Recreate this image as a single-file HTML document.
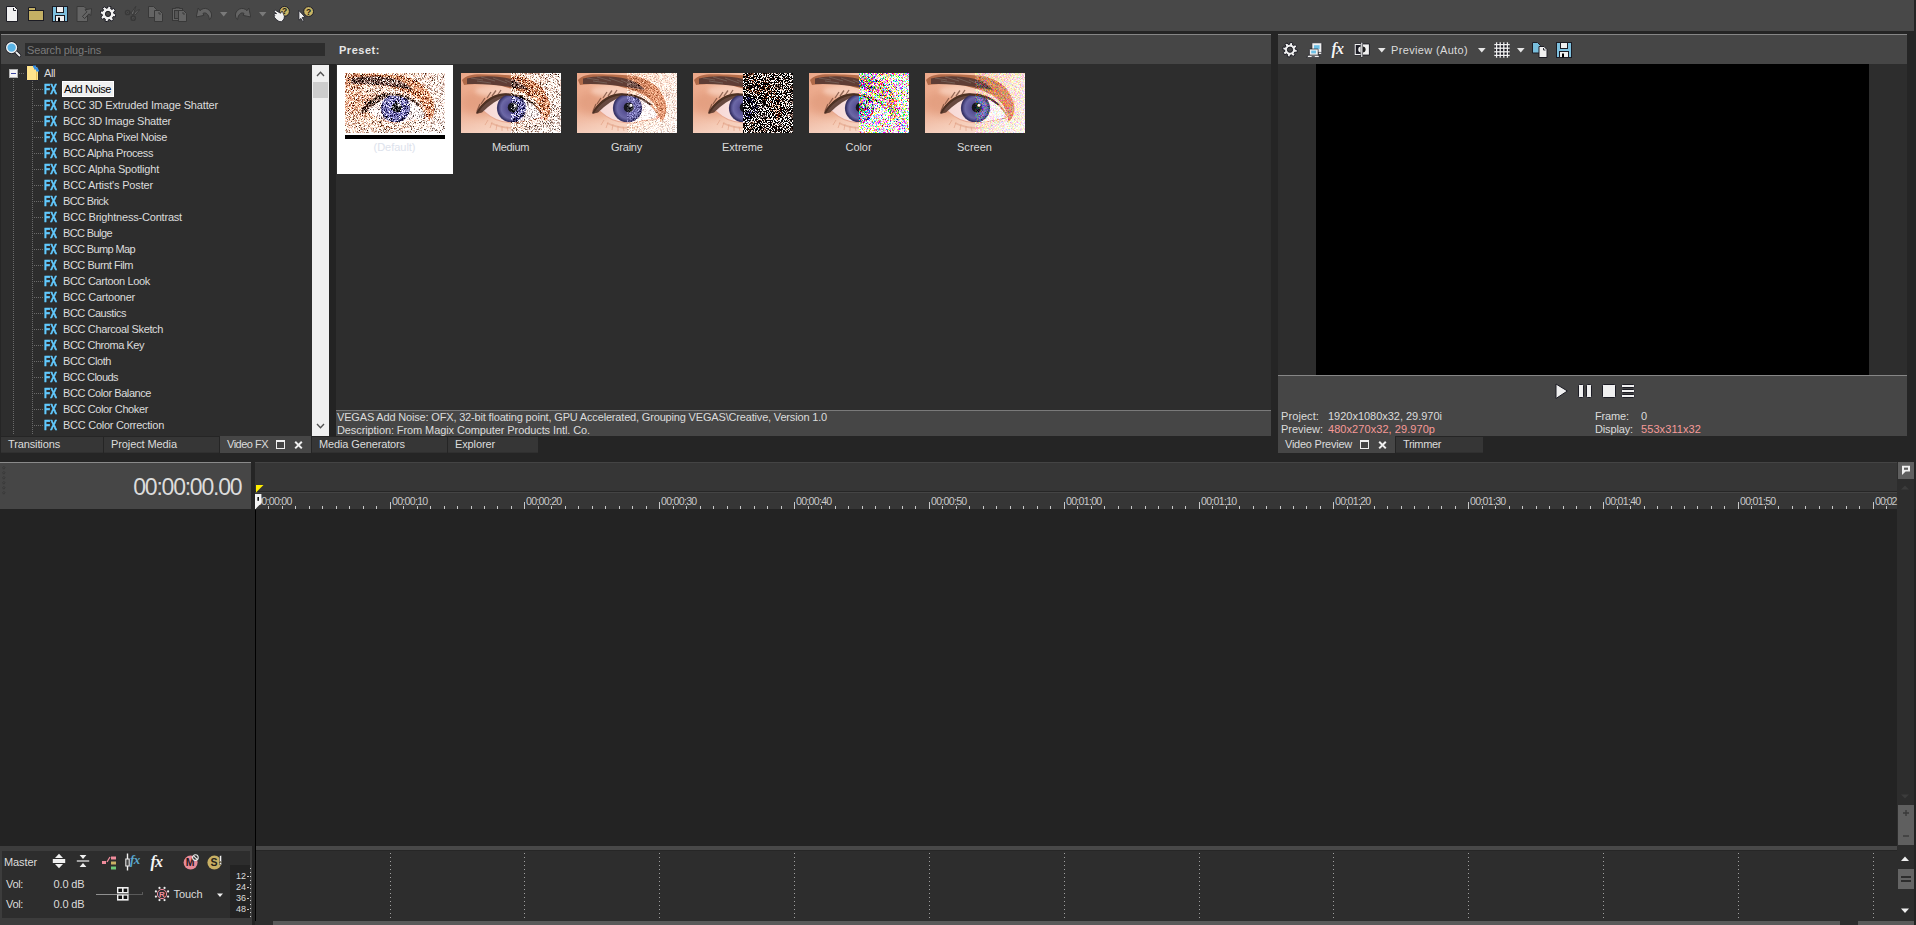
<!DOCTYPE html>
<html><head><meta charset="utf-8"><title>VEGAS Pro</title>
<style>
html,body{margin:0;padding:0;}
body{width:1916px;height:925px;overflow:hidden;background:#252525;position:relative;font-family:"Liberation Sans", sans-serif;font-size:11px;}
div,span.t,svg{position:absolute;}
span.t{white-space:pre;}
</style></head>
<body>
<div style="left:0px;top:0px;width:1914px;height:31px;background:#484848;"></div>
<svg style="left:4px;top:6px;" width="16" height="16" viewBox="0 0 16 16"><path d="M2.5,0.5H10.5L13.5,3.5V15.5H2.5Z" fill="#f0f0f0" stroke="#1c1c24"/><path d="M9.5,2V4.5H12" fill="none" stroke="#1c1c24"/></svg>
<svg style="left:28px;top:6px;" width="16" height="16" viewBox="0 0 16 16"><path d="M0.5,4.5V1.5H7.5V4.5" fill="#c4b064" stroke="#1c1c24"/><rect x="0.5" y="4.5" width="15" height="10" fill="#c4b064" stroke="#1c1c24"/></svg>
<svg style="left:52px;top:6px;" width="16" height="16" viewBox="0 0 16 16"><rect x="0.5" y="0.5" width="15" height="15" fill="#7ec0de" stroke="#1c1c24"/><rect x="4.5" y="0.5" width="7" height="6" fill="#f0f0f0" stroke="#1c1c24"/><rect x="3.5" y="9.5" width="9" height="6" fill="#f0f0f0" stroke="#1c1c24"/><rect x="6" y="11.5" width="2" height="4" fill="#000"/></svg>
<svg style="left:76px;top:6px;" width="16" height="16" viewBox="0 0 16 16"><path d="M1,0.5H8L11.5,4V15.5H1Z" fill="#646464" stroke="#383838"/><path d="M15.6,2.6L14.8,9.6L13,7.8L8.6,12.6L6.4,10.4L11,5.8L9,3.8Z" fill="#646464" stroke="#383838" stroke-linejoin="round"/></svg>
<svg style="left:100px;top:6px;" width="16" height="16" viewBox="0 0 16 16"><path d="M15.90,7.99L15.31,10.89L13.27,10.56L12.44,11.78L13.52,13.55L11.05,15.19L9.85,13.50L8.40,13.79L7.91,15.80L5.01,15.21L5.34,13.17L4.12,12.34L2.35,13.42L0.71,10.95L2.40,9.75L2.11,8.30L0.10,7.81L0.69,4.91L2.73,5.24L3.56,4.02L2.48,2.25L4.95,0.61L6.15,2.30L7.60,2.01L8.09,0.00L10.99,0.59L10.66,2.63L11.88,3.46L13.65,2.38L15.29,4.85L13.60,6.05L13.89,7.50Z" fill="#f0f0f0" stroke="#1c1c24" stroke-linejoin="round"/><circle cx="8" cy="7.9" r="2.6" fill="#484848" stroke="#1c1c24"/></svg>
<svg style="left:124px;top:6px;" width="16" height="16" viewBox="0 0 16 16"><circle cx="3.6" cy="6.5" r="2.1" fill="#525252" stroke="#383838" stroke-width="1.5"/><circle cx="3.6" cy="6.5" r="0.7" fill="#383838"/><circle cx="9.2" cy="12.2" r="2.1" fill="#525252" stroke="#383838" stroke-width="1.5"/><circle cx="9.2" cy="12.2" r="0.7" fill="#383838"/><path d="M6.9,7.3L9.3,9L11.7,0.4Z" fill="#646464" stroke="#383838" stroke-width="0.9" stroke-linejoin="round"/><path d="M10,7.4L11.6,8.6L15.7,3.6L13.2,4.4Z" fill="#646464" stroke="#383838" stroke-width="0.9" stroke-linejoin="round"/></svg>
<svg style="left:148px;top:6px;" width="16" height="16" viewBox="0 0 16 16"><path d="M0.5,0.5H5.5L8.5,3.5V11.5H0.5Z" fill="#646464" stroke="#383838"/><path d="M6.5,4.5H11.5L14.5,7.5V15.5H6.5Z" fill="#646464" stroke="#383838"/><path d="M11.0,6.0V8.0H13.0" fill="none" stroke="#383838" stroke-width="0.9"/></svg>
<svg style="left:172px;top:6px;" width="16" height="16" viewBox="0 0 16 16"><rect x="0.5" y="2.5" width="10" height="12" fill="#646464" stroke="#383838"/><rect x="2.5" y="4.5" width="4" height="8" fill="#555" stroke="#383838"/><path d="M3.5,2.5V1.5H7.5V2.5" fill="#646464" stroke="#383838"/><path d="M6.5,4.5H11.5L14.5,7.5V15.5H6.5Z" fill="#646464" stroke="#383838"/><path d="M11.0,6.0V8.0H13.0" fill="none" stroke="#383838" stroke-width="0.9"/></svg>
<svg style="left:196px;top:6px;" width="16" height="16" viewBox="0 0 16 16"><path d="M2.2,2L4,4.7C6,2.5 9,1.8 11.5,3C14.5,4.5 16,7.5 15.5,10C15.2,11.8 14.5,12.8 13.4,13.6C13.2,11 12.2,8.6 10.4,7.4C9.2,6.7 8,6.8 7,7.4L7.8,9.4L0.2,11Z" fill="#646464" stroke="#383838" stroke-linejoin="round"/></svg>
<svg style="left:220px;top:12px;" width="8" height="5" viewBox="0 0 8 5"><path d="M0,0H7.4L3.7,4.4Z" fill="#7a7a7a"/></svg>
<svg style="left:235px;top:6px;transform:scaleX(-1);" width="16" height="16" viewBox="0 0 16 16"><path d="M2.2,2L4,4.7C6,2.5 9,1.8 11.5,3C14.5,4.5 16,7.5 15.5,10C15.2,11.8 14.5,12.8 13.4,13.6C13.2,11 12.2,8.6 10.4,7.4C9.2,6.7 8,6.8 7,7.4L7.8,9.4L0.2,11Z" fill="#646464" stroke="#383838" stroke-linejoin="round"/></svg>
<svg style="left:259px;top:12px;" width="8" height="5" viewBox="0 0 8 5"><path d="M0,0H7.4L3.7,4.4Z" fill="#7a7a7a"/></svg>
<svg style="left:272px;top:4px;" width="20" height="20" viewBox="0 0 20 20"><circle cx="12.5" cy="7.35" r="4.9" fill="#c8b464" stroke="#1c1c28" stroke-width="1"/><text x="12.5" y="10.35" font-size="8.5" font-weight="bold" text-anchor="middle" fill="#1a1810" font-family="Liberation Sans,sans-serif">?</text><path d="M2.4,6.6L3.4,6.3L7.6,8.7L8.9,9.2L9.4,7.4L10.5,7.4L11.7,10.7L12.4,12.2L12,15L9.6,17.7L7,17.5L4.4,15.6L2.6,13.6L2.2,12.2L2.8,11.4L2.2,10.4L3,9.4L4.6,9.6L2.2,7.8Z" fill="#f0f0f0" stroke="#1c1c24" stroke-width="0.8" stroke-linejoin="round"/></svg>
<svg style="left:296px;top:4px;" width="20" height="20" viewBox="0 0 20 20"><circle cx="12.6" cy="7.5" r="4.9" fill="#c8b464" stroke="#1c1c28" stroke-width="1"/><text x="12.6" y="10.5" font-size="8.5" font-weight="bold" text-anchor="middle" fill="#1a1810" font-family="Liberation Sans,sans-serif">?</text><path d="M2.9,6.5V16.2L4.9,14.4L6.7,17.5L7.9,16.7L6.2,13.5L9.1,13.2Z" fill="#f0f0f0" stroke="#1c1c24" stroke-width="0.8" stroke-linejoin="round"/></svg>
<div style="left:1px;top:34px;width:1270px;height:1px;background:#868686;"></div>
<div style="left:1px;top:35px;width:1270px;height:29px;background:#464646;"></div>
<div style="left:25px;top:43px;width:300px;height:13px;background:#2d2d2d;"></div>
<span class="t" id="t1" style="left:27px;top:41.5px;line-height:16px;font-size:11px;color:#7b7b7b;letter-spacing:-0.163px;">Search plug-ins</span>
<svg style="left:4px;top:40px;" width="18" height="18" viewBox="0 0 18 18"><path d="M11,11L15.5,15.5" stroke="#1c1c24" stroke-width="3.4" stroke-linecap="round"/><path d="M11,11L15.5,15.5" stroke="#f0f0f0" stroke-width="1.8" stroke-linecap="round"/><circle cx="7.6" cy="7.6" r="4.9" fill="#5ab4e6" stroke="#1c1c24" stroke-width="2.8"/><circle cx="7.6" cy="7.6" r="4.9" fill="#5ab4e6" stroke="#f0f0f0" stroke-width="1.4"/></svg>
<span class="t" id="t2" style="left:339px;top:42.0px;line-height:16px;font-size:11px;color:#e6e6e6;font-weight:bold;letter-spacing:0.529px;">Preset:</span>
<div style="left:1px;top:64px;width:328px;height:372px;background:#2d2d2d;"></div>
<div style="left:329px;top:64px;width:7px;height:372px;background:#232323;"></div>
<div style="left:336px;top:64px;width:935px;height:346px;background:#2d2d2d;"></div>
<div style="left:336px;top:410px;width:935px;height:26px;background:#464646;"></div>
<div style="left:336px;top:410px;width:935px;height:1px;background:#7a7a7a;"></div>
<span class="t" id="t3" style="left:337px;top:409.0px;line-height:16px;font-size:11px;color:#dcdcdc;letter-spacing:-0.172px;">VEGAS Add Noise: OFX, 32-bit floating point, GPU Accelerated, Grouping VEGAS\Creative, Version 1.0</span>
<span class="t" id="t4" style="left:337px;top:422.0px;line-height:16px;font-size:11px;color:#dcdcdc;letter-spacing:-0.098px;">Description: From Magix Computer Products Intl. Co.</span>
<div style="left:312px;top:65px;width:17px;height:371px;background:#f0f0f0;"></div>
<div style="left:313px;top:82px;width:15px;height:16px;background:#cdcdcd;"></div>
<svg style="left:316px;top:70px;" width="9" height="8" viewBox="0 0 9 8"><path d="M1,6L4.5,2.2L8,6" fill="none" stroke="#505050" stroke-width="1.3"/></svg>
<svg style="left:316px;top:422px;" width="9" height="8" viewBox="0 0 9 8"><path d="M1,2L4.5,5.8L8,2" fill="none" stroke="#505050" stroke-width="1.3"/></svg>
<div style="left:13px;top:79px;width:1px;height:355px;background:repeating-linear-gradient(to bottom,#6a6a6a 0 1px,transparent 1px 2px);"></div>
<div style="left:32px;top:81px;width:1px;height:353px;background:repeating-linear-gradient(to bottom,#6a6a6a 0 1px,transparent 1px 2px);"></div>
<div style="left:19px;top:73px;width:6px;height:1px;background:repeating-linear-gradient(to right,#6a6a6a 0 1px,transparent 1px 2px);"></div>
<svg style="left:9px;top:69px;" width="9" height="9" viewBox="0 0 9 9"><rect x="0.5" y="0.5" width="8" height="8" fill="#f4f4f4" stroke="#b4b4b4"/><path d="M2,4.5H7" stroke="#3c46a0" stroke-width="1"/></svg>
<svg style="left:26px;top:65px;" width="14" height="16" viewBox="0 0 14 16"><path d="M0.5,0.5H9.5L12.5,4V15.5H0.5Z" fill="#ffe38c" stroke="#26262e"/><path d="M10.5,7V15" stroke="#e6c05a" stroke-width="1"/><path d="M7,1.5L9,1.5L9,3.5L11,3.5L11,5.5L13,5.5" fill="none" stroke="#2f8be6" stroke-width="1.8"/></svg>
<span class="t" id="t5" style="left:44px;top:65.0px;line-height:16px;font-size:11px;color:#dcdcdc;letter-spacing:-0.411px;">All</span>
<div style="left:62px;top:81px;width:52px;height:16px;background:#f0f0f0;box-sizing:border-box;border:1px solid #fff;"></div>
<div style="left:34px;top:89px;width:9px;height:1px;background:repeating-linear-gradient(to right,#6a6a6a 0 1px,transparent 1px 2px);"></div>
<span class="t" id="t6" style="left:64px;top:81.0px;line-height:16px;font-size:11px;color:#000000;letter-spacing:-0.418px;">Add Noise</span>
<span class="t" id="t7" style="left:43.5px;top:81.0px;line-height:16px;font-size:14px;color:#62caff;font-weight:bold;transform:scaleX(0.72);transform-origin:0 50%;text-shadow:0 0 1px #2a1a10;-webkit-text-stroke:0.5px #62caff;">FX</span>
<div style="left:34px;top:105px;width:9px;height:1px;background:repeating-linear-gradient(to right,#6a6a6a 0 1px,transparent 1px 2px);"></div>
<span class="t" id="t8" style="left:63px;top:97.0px;line-height:16px;font-size:11px;color:#dcdcdc;letter-spacing:-0.158px;">BCC 3D Extruded Image Shatter</span>
<span class="t" id="t9" style="left:43.5px;top:97.0px;line-height:16px;font-size:14px;color:#62caff;font-weight:bold;transform:scaleX(0.72);transform-origin:0 50%;text-shadow:0 0 1px #2a1a10;-webkit-text-stroke:0.5px #62caff;">FX</span>
<div style="left:34px;top:121px;width:9px;height:1px;background:repeating-linear-gradient(to right,#6a6a6a 0 1px,transparent 1px 2px);"></div>
<span class="t" id="t10" style="left:63px;top:113.0px;line-height:16px;font-size:11px;color:#dcdcdc;letter-spacing:-0.225px;">BCC 3D Image Shatter</span>
<span class="t" id="t11" style="left:43.5px;top:113.0px;line-height:16px;font-size:14px;color:#62caff;font-weight:bold;transform:scaleX(0.72);transform-origin:0 50%;text-shadow:0 0 1px #2a1a10;-webkit-text-stroke:0.5px #62caff;">FX</span>
<div style="left:34px;top:137px;width:9px;height:1px;background:repeating-linear-gradient(to right,#6a6a6a 0 1px,transparent 1px 2px);"></div>
<span class="t" id="t12" style="left:63px;top:129.0px;line-height:16px;font-size:11px;color:#dcdcdc;letter-spacing:-0.376px;">BCC Alpha Pixel Noise</span>
<span class="t" id="t13" style="left:43.5px;top:129.0px;line-height:16px;font-size:14px;color:#62caff;font-weight:bold;transform:scaleX(0.72);transform-origin:0 50%;text-shadow:0 0 1px #2a1a10;-webkit-text-stroke:0.5px #62caff;">FX</span>
<div style="left:34px;top:153px;width:9px;height:1px;background:repeating-linear-gradient(to right,#6a6a6a 0 1px,transparent 1px 2px);"></div>
<span class="t" id="t14" style="left:63px;top:145.0px;line-height:16px;font-size:11px;color:#dcdcdc;letter-spacing:-0.389px;">BCC Alpha Process</span>
<span class="t" id="t15" style="left:43.5px;top:145.0px;line-height:16px;font-size:14px;color:#62caff;font-weight:bold;transform:scaleX(0.72);transform-origin:0 50%;text-shadow:0 0 1px #2a1a10;-webkit-text-stroke:0.5px #62caff;">FX</span>
<div style="left:34px;top:169px;width:9px;height:1px;background:repeating-linear-gradient(to right,#6a6a6a 0 1px,transparent 1px 2px);"></div>
<span class="t" id="t16" style="left:63px;top:161.0px;line-height:16px;font-size:11px;color:#dcdcdc;letter-spacing:-0.193px;">BCC Alpha Spotlight</span>
<span class="t" id="t17" style="left:43.5px;top:161.0px;line-height:16px;font-size:14px;color:#62caff;font-weight:bold;transform:scaleX(0.72);transform-origin:0 50%;text-shadow:0 0 1px #2a1a10;-webkit-text-stroke:0.5px #62caff;">FX</span>
<div style="left:34px;top:185px;width:9px;height:1px;background:repeating-linear-gradient(to right,#6a6a6a 0 1px,transparent 1px 2px);"></div>
<span class="t" id="t18" style="left:63px;top:177.0px;line-height:16px;font-size:11px;color:#dcdcdc;letter-spacing:-0.168px;">BCC Artist's Poster</span>
<span class="t" id="t19" style="left:43.5px;top:177.0px;line-height:16px;font-size:14px;color:#62caff;font-weight:bold;transform:scaleX(0.72);transform-origin:0 50%;text-shadow:0 0 1px #2a1a10;-webkit-text-stroke:0.5px #62caff;">FX</span>
<div style="left:34px;top:201px;width:9px;height:1px;background:repeating-linear-gradient(to right,#6a6a6a 0 1px,transparent 1px 2px);"></div>
<span class="t" id="t20" style="left:63px;top:193.0px;line-height:16px;font-size:11px;color:#dcdcdc;letter-spacing:-0.637px;">BCC Brick</span>
<span class="t" id="t21" style="left:43.5px;top:193.0px;line-height:16px;font-size:14px;color:#62caff;font-weight:bold;transform:scaleX(0.72);transform-origin:0 50%;text-shadow:0 0 1px #2a1a10;-webkit-text-stroke:0.5px #62caff;">FX</span>
<div style="left:34px;top:217px;width:9px;height:1px;background:repeating-linear-gradient(to right,#6a6a6a 0 1px,transparent 1px 2px);"></div>
<span class="t" id="t22" style="left:63px;top:209.0px;line-height:16px;font-size:11px;color:#dcdcdc;letter-spacing:-0.196px;">BCC Brightness-Contrast</span>
<span class="t" id="t23" style="left:43.5px;top:209.0px;line-height:16px;font-size:14px;color:#62caff;font-weight:bold;transform:scaleX(0.72);transform-origin:0 50%;text-shadow:0 0 1px #2a1a10;-webkit-text-stroke:0.5px #62caff;">FX</span>
<div style="left:34px;top:233px;width:9px;height:1px;background:repeating-linear-gradient(to right,#6a6a6a 0 1px,transparent 1px 2px);"></div>
<span class="t" id="t24" style="left:63px;top:225.0px;line-height:16px;font-size:11px;color:#dcdcdc;letter-spacing:-0.602px;">BCC Bulge</span>
<span class="t" id="t25" style="left:43.5px;top:225.0px;line-height:16px;font-size:14px;color:#62caff;font-weight:bold;transform:scaleX(0.72);transform-origin:0 50%;text-shadow:0 0 1px #2a1a10;-webkit-text-stroke:0.5px #62caff;">FX</span>
<div style="left:34px;top:249px;width:9px;height:1px;background:repeating-linear-gradient(to right,#6a6a6a 0 1px,transparent 1px 2px);"></div>
<span class="t" id="t26" style="left:63px;top:241.0px;line-height:16px;font-size:11px;color:#dcdcdc;letter-spacing:-0.624px;">BCC Bump Map</span>
<span class="t" id="t27" style="left:43.5px;top:241.0px;line-height:16px;font-size:14px;color:#62caff;font-weight:bold;transform:scaleX(0.72);transform-origin:0 50%;text-shadow:0 0 1px #2a1a10;-webkit-text-stroke:0.5px #62caff;">FX</span>
<div style="left:34px;top:265px;width:9px;height:1px;background:repeating-linear-gradient(to right,#6a6a6a 0 1px,transparent 1px 2px);"></div>
<span class="t" id="t28" style="left:63px;top:257.0px;line-height:16px;font-size:11px;color:#dcdcdc;letter-spacing:-0.458px;">BCC Burnt Film</span>
<span class="t" id="t29" style="left:43.5px;top:257.0px;line-height:16px;font-size:14px;color:#62caff;font-weight:bold;transform:scaleX(0.72);transform-origin:0 50%;text-shadow:0 0 1px #2a1a10;-webkit-text-stroke:0.5px #62caff;">FX</span>
<div style="left:34px;top:281px;width:9px;height:1px;background:repeating-linear-gradient(to right,#6a6a6a 0 1px,transparent 1px 2px);"></div>
<span class="t" id="t30" style="left:63px;top:273.0px;line-height:16px;font-size:11px;color:#dcdcdc;letter-spacing:-0.333px;">BCC Cartoon Look</span>
<span class="t" id="t31" style="left:43.5px;top:273.0px;line-height:16px;font-size:14px;color:#62caff;font-weight:bold;transform:scaleX(0.72);transform-origin:0 50%;text-shadow:0 0 1px #2a1a10;-webkit-text-stroke:0.5px #62caff;">FX</span>
<div style="left:34px;top:297px;width:9px;height:1px;background:repeating-linear-gradient(to right,#6a6a6a 0 1px,transparent 1px 2px);"></div>
<span class="t" id="t32" style="left:63px;top:289.0px;line-height:16px;font-size:11px;color:#dcdcdc;letter-spacing:-0.246px;">BCC Cartooner</span>
<span class="t" id="t33" style="left:43.5px;top:289.0px;line-height:16px;font-size:14px;color:#62caff;font-weight:bold;transform:scaleX(0.72);transform-origin:0 50%;text-shadow:0 0 1px #2a1a10;-webkit-text-stroke:0.5px #62caff;">FX</span>
<div style="left:34px;top:313px;width:9px;height:1px;background:repeating-linear-gradient(to right,#6a6a6a 0 1px,transparent 1px 2px);"></div>
<span class="t" id="t34" style="left:63px;top:305.0px;line-height:16px;font-size:11px;color:#dcdcdc;letter-spacing:-0.456px;">BCC Caustics</span>
<span class="t" id="t35" style="left:43.5px;top:305.0px;line-height:16px;font-size:14px;color:#62caff;font-weight:bold;transform:scaleX(0.72);transform-origin:0 50%;text-shadow:0 0 1px #2a1a10;-webkit-text-stroke:0.5px #62caff;">FX</span>
<div style="left:34px;top:329px;width:9px;height:1px;background:repeating-linear-gradient(to right,#6a6a6a 0 1px,transparent 1px 2px);"></div>
<span class="t" id="t36" style="left:63px;top:321.0px;line-height:16px;font-size:11px;color:#dcdcdc;letter-spacing:-0.368px;">BCC Charcoal Sketch</span>
<span class="t" id="t37" style="left:43.5px;top:321.0px;line-height:16px;font-size:14px;color:#62caff;font-weight:bold;transform:scaleX(0.72);transform-origin:0 50%;text-shadow:0 0 1px #2a1a10;-webkit-text-stroke:0.5px #62caff;">FX</span>
<div style="left:34px;top:345px;width:9px;height:1px;background:repeating-linear-gradient(to right,#6a6a6a 0 1px,transparent 1px 2px);"></div>
<span class="t" id="t38" style="left:63px;top:337.0px;line-height:16px;font-size:11px;color:#dcdcdc;letter-spacing:-0.459px;">BCC Chroma Key</span>
<span class="t" id="t39" style="left:43.5px;top:337.0px;line-height:16px;font-size:14px;color:#62caff;font-weight:bold;transform:scaleX(0.72);transform-origin:0 50%;text-shadow:0 0 1px #2a1a10;-webkit-text-stroke:0.5px #62caff;">FX</span>
<div style="left:34px;top:361px;width:9px;height:1px;background:repeating-linear-gradient(to right,#6a6a6a 0 1px,transparent 1px 2px);"></div>
<span class="t" id="t40" style="left:63px;top:353.0px;line-height:16px;font-size:11px;color:#dcdcdc;letter-spacing:-0.441px;">BCC Cloth</span>
<span class="t" id="t41" style="left:43.5px;top:353.0px;line-height:16px;font-size:14px;color:#62caff;font-weight:bold;transform:scaleX(0.72);transform-origin:0 50%;text-shadow:0 0 1px #2a1a10;-webkit-text-stroke:0.5px #62caff;">FX</span>
<div style="left:34px;top:377px;width:9px;height:1px;background:repeating-linear-gradient(to right,#6a6a6a 0 1px,transparent 1px 2px);"></div>
<span class="t" id="t42" style="left:63px;top:369.0px;line-height:16px;font-size:11px;color:#dcdcdc;letter-spacing:-0.553px;">BCC Clouds</span>
<span class="t" id="t43" style="left:43.5px;top:369.0px;line-height:16px;font-size:14px;color:#62caff;font-weight:bold;transform:scaleX(0.72);transform-origin:0 50%;text-shadow:0 0 1px #2a1a10;-webkit-text-stroke:0.5px #62caff;">FX</span>
<div style="left:34px;top:393px;width:9px;height:1px;background:repeating-linear-gradient(to right,#6a6a6a 0 1px,transparent 1px 2px);"></div>
<span class="t" id="t44" style="left:63px;top:385.0px;line-height:16px;font-size:11px;color:#dcdcdc;letter-spacing:-0.434px;">BCC Color Balance</span>
<span class="t" id="t45" style="left:43.5px;top:385.0px;line-height:16px;font-size:14px;color:#62caff;font-weight:bold;transform:scaleX(0.72);transform-origin:0 50%;text-shadow:0 0 1px #2a1a10;-webkit-text-stroke:0.5px #62caff;">FX</span>
<div style="left:34px;top:409px;width:9px;height:1px;background:repeating-linear-gradient(to right,#6a6a6a 0 1px,transparent 1px 2px);"></div>
<span class="t" id="t46" style="left:63px;top:401.0px;line-height:16px;font-size:11px;color:#dcdcdc;letter-spacing:-0.381px;">BCC Color Choker</span>
<span class="t" id="t47" style="left:43.5px;top:401.0px;line-height:16px;font-size:14px;color:#62caff;font-weight:bold;transform:scaleX(0.72);transform-origin:0 50%;text-shadow:0 0 1px #2a1a10;-webkit-text-stroke:0.5px #62caff;">FX</span>
<div style="left:34px;top:425px;width:9px;height:1px;background:repeating-linear-gradient(to right,#6a6a6a 0 1px,transparent 1px 2px);"></div>
<span class="t" id="t48" style="left:63px;top:417.0px;line-height:16px;font-size:11px;color:#dcdcdc;letter-spacing:-0.269px;">BCC Color Correction</span>
<span class="t" id="t49" style="left:43.5px;top:417.0px;line-height:16px;font-size:14px;color:#62caff;font-weight:bold;transform:scaleX(0.72);transform-origin:0 50%;text-shadow:0 0 1px #2a1a10;-webkit-text-stroke:0.5px #62caff;">FX</span>
<div style="left:34px;top:452px;width:0px;height:0px;"></div>
<div style="left:337px;top:65px;width:116px;height:109px;background:#ffffff;"></div>
<div style="left:345px;top:135px;width:100px;height:4px;background:#000000;"></div>
<svg width="0" height="0" style="left:0;top:0"><defs>
<linearGradient id="sk" x1="0" y1="0" x2="1" y2="0"><stop offset="0" stop-color="#eba586"/><stop offset=".3" stop-color="#f2b698"/><stop offset=".65" stop-color="#f6c8b2"/><stop offset="1" stop-color="#fadcd2"/></linearGradient>
<linearGradient id="sk2" x1="0" y1="0" x2="0" y2="1"><stop offset="0" stop-color="#fff" stop-opacity="0"/><stop offset=".6" stop-color="#fff" stop-opacity="0.1"/><stop offset="1" stop-color="#fff" stop-opacity="0.45"/></linearGradient>
<linearGradient id="bg" x1="0" y1="0" x2="1" y2="0"><stop offset="0" stop-color="#b06a4a"/><stop offset=".55" stop-color="#b86e4a"/><stop offset="1" stop-color="#d08460"/></linearGradient>
<linearGradient id="sc" x1="0" y1="0" x2="1" y2="0"><stop offset="0" stop-color="#f6d6d2"/><stop offset=".5" stop-color="#fbe6e6"/><stop offset="1" stop-color="#fdf2f2"/></linearGradient>
<radialGradient id="ir"><stop offset="0" stop-color="#423e74"/><stop offset=".5" stop-color="#5e589a"/><stop offset=".8" stop-color="#6c68a6"/><stop offset="1" stop-color="#46427c"/></radialGradient>
<clipPath id="eo"><path d="M19,36.5C21,33 24,29.5 28,26.6C33,23.4 38,21.8 44,21.6C50,21.4 56,22.4 61,24.2C66,26 70,28.6 74,32C77.5,35.4 80.5,39.5 82.5,44C78,45.6 72,46.8 66,47.6C60,49 55,49.8 50.5,49.8C45,49.6 40,48.6 35,46.4C30,44 26,41 23,38.2Z"/></clipPath>
<clipPath id="rh"><rect x="50" y="0" width="50" height="60"/></clipPath>
<filter id="bl3" x="-0.3" y="-0.5" width="1.6" height="2"><feGaussianBlur stdDeviation="2"/></filter>
<filter id="bl2" x="-0.3" y="-0.3" width="1.6" height="1.6"><feGaussianBlur stdDeviation="4"/></filter>
<filter id="bl" x="-0.05" y="-0.05" width="1.1" height="1.1"><feGaussianBlur stdDeviation="0.55"/></filter>
<filter id="nD" x="0" y="0" width="1" height="1" color-interpolation-filters="sRGB"><feTurbulence type="fractalNoise" baseFrequency="1.37 1.71" numOctaves="2" seed="4"/><feColorMatrix values="1 0 0 0 0  1 0 0 0 0  1 0 0 0 0  0 0 0 0 1"/><feComposite in="SourceGraphic" operator="arithmetic" k1="0" k2="1" k3="2.8" k4="-1.3"/></filter><filter id="nM" x="0" y="0" width="1" height="1" color-interpolation-filters="sRGB"><feTurbulence type="fractalNoise" baseFrequency="1.37 1.71" numOctaves="2" seed="8"/><feColorMatrix values="1 0 0 0 0  1 0 0 0 0  1 0 0 0 0  0 0 0 0 1"/><feComposite in="SourceGraphic" operator="arithmetic" k1="0" k2="1" k3="2.8" k4="-1.32"/></filter><filter id="nG" x="0" y="0" width="1" height="1" color-interpolation-filters="sRGB"><feTurbulence type="fractalNoise" baseFrequency="1.83 1.57" numOctaves="2" seed="9"/><feColorMatrix values="1 0 0 0 0  1 0 0 0 0  1 0 0 0 0  0 0 0 0 1"/><feComposite in="SourceGraphic" operator="arithmetic" k1="0" k2="1" k3="1.1" k4="-0.47"/></filter><filter id="nE" x="0" y="0" width="1" height="1" color-interpolation-filters="sRGB"><feTurbulence type="fractalNoise" baseFrequency="0.93 1.07" numOctaves="2" seed="7"/><feColorMatrix values="1 0 0 0 0  1 0 0 0 0  1 0 0 0 0  0 0 0 0 1"/><feComposite in="SourceGraphic" operator="arithmetic" k1="0" k2="1" k3="14" k4="-7.8"/></filter><filter id="nC" x="0" y="0" width="1" height="1" color-interpolation-filters="sRGB"><feTurbulence type="fractalNoise" baseFrequency="1.37 1.71" numOctaves="2" seed="11"/><feColorMatrix values="1 0 0 0 0  0 1 0 0 0  0 0 1 0 0  0 0 0 0 1"/><feComposite in="SourceGraphic" operator="arithmetic" k1="0" k2="1" k3="5.5" k4="-2.45"/></filter><filter id="nS" x="0" y="0" width="1" height="1" color-interpolation-filters="sRGB"><feTurbulence type="fractalNoise" baseFrequency="1.37 1.71" numOctaves="2" seed="5"/><feColorMatrix values="1 0 0 0 0  0 1 0 0 0  0 0 1 0 0  0 0 0 0 1"/><feComposite in="SourceGraphic" operator="arithmetic" k1="0" k2="1" k3="1.0" k4="-0.44"/></filter></defs></svg>
<svg style="left:345px;top:73px;" width="100" height="60" viewBox="0 0 100 60"><g filter="url(#nD)"><g filter="url(#bl)"><rect x="-2" y="-2" width="104" height="64" fill="url(#sk)"/>
<rect x="-2" y="-2" width="104" height="64" fill="url(#sk2)"/>
<ellipse cx="20" cy="30" rx="20" ry="13" fill="#d88c6c" opacity=".5" filter="url(#bl2)"/>
<ellipse cx="34" cy="18" rx="20" ry="5.5" fill="#fbd6c4" opacity=".7" filter="url(#bl3)"/><path d="M1,7C5,2.4 12,1 20,1.2C34,1.4 48,1.8 58,3C66,4.4 74,8.5 80,14C85,19 88.5,27 89.5,34C89.5,41 87,47 83.5,49C83,44 82,40 80.5,37C79,33.5 77,30.5 75,28.5C72,25.5 69,23 65,21C60,18.4 55,17 50,15.6C42,13.2 36,11.6 28,11C18,10.4 10,11.4 3,12Z" fill="url(#bg)"/>
<path d="M6,5.6C20,2.4 36,2.6 50,6C58,8.2 64,12 68,17C60,15.6 53,14.6 46,13.6C34,11.4 20,10.6 6,11Z" fill="#583a32" opacity=".92"/>
<path d="M10,5L22,7M20,4L34,8M32,5L46,10M44,7L58,13M16,8L30,10" stroke="#8a8078" stroke-width=".8" opacity=".6"/>
<path d="M19,36.5C21,33 24,29.5 28,26.6C33,23.4 38,21.8 44,21.6C50,21.4 56,22.4 61,24.2C66,26 70,28.6 74,32C77.5,35.4 80.5,39.5 82.5,44C78,45.6 72,46.8 66,47.6C60,49 55,49.8 50.5,49.8C45,49.6 40,48.6 35,46.4C30,44 26,41 23,38.2Z" fill="url(#sc)"/>
<g clip-path="url(#eo)"><circle cx="50.5" cy="35" r="14.6" fill="#3a3668"/><circle cx="50.5" cy="35" r="13" fill="url(#ir)"/>
<circle cx="51.8" cy="34.4" r="5" fill="#15131e"/><circle cx="54" cy="32.3" r="1.5" fill="#fff"/></g>
<path d="M16,40C18,36 22,31 28,26.8C33,23.4 38,21.6 44,21.4C50,21.2 56,22.2 61,24C66,26 70,28.6 74,32" stroke="#4a2e24" stroke-width="2.2" fill="none"/>
<path d="M15,41L20,33L25,27.6L31,23.6L38,21L46,20.4L40,25.6L33,29.6L27,34L21,39.6Z" fill="#4e3024" opacity=".85"/>
<path d="M26,25L30,19M31,23L35,17.5M37,21.5L40,17M20,31L24,25M16,38L19,31" stroke="#6a4030" stroke-width="1.3" opacity=".7"/>
<path d="M74,32C77.5,35.4 80.5,39.5 82.5,44" stroke="#c88462" stroke-width="1.8" fill="none"/>
<path d="M82.5,44C78,45.8 72,47 66,47.8C60,49.2 55,50 50.5,50C45,49.8 40,48.8 35,46.6C30,44.2 26,41.2 23,38.4" stroke="#e8a890" stroke-width="1.1" fill="none"/>
<path d="M30,50C38,54 50,56 62,54" stroke="#e4aa90" stroke-width="1.6" fill="none" opacity=".7"/><path d="M27,47L24,52M31,49.5L29,55M36,51.5L35,57M41,53L41,58M46,53.6L47,58" stroke="#e09c80" stroke-width="1" opacity=".6"/><path d="M79,42L82.5,44L80,46.5Z" fill="#f0a090"/></g></g></svg>
<span class="t" id="t50" style="left:394.5px;top:139.0px;line-height:16px;font-size:11px;color:#dde2ec;transform:translateX(-50%);letter-spacing:-0.021px;">(Default)</span>
<svg style="left:461px;top:73px;" width="100" height="60" viewBox="0 0 100 60"><g filter="url(#bl)"><rect x="-2" y="-2" width="104" height="64" fill="url(#sk)"/>
<rect x="-2" y="-2" width="104" height="64" fill="url(#sk2)"/>
<ellipse cx="20" cy="30" rx="20" ry="13" fill="#d88c6c" opacity=".5" filter="url(#bl2)"/>
<ellipse cx="34" cy="18" rx="20" ry="5.5" fill="#fbd6c4" opacity=".7" filter="url(#bl3)"/><path d="M1,7C5,2.4 12,1 20,1.2C34,1.4 48,1.8 58,3C66,4.4 74,8.5 80,14C85,19 88.5,27 89.5,34C89.5,41 87,47 83.5,49C83,44 82,40 80.5,37C79,33.5 77,30.5 75,28.5C72,25.5 69,23 65,21C60,18.4 55,17 50,15.6C42,13.2 36,11.6 28,11C18,10.4 10,11.4 3,12Z" fill="url(#bg)"/>
<path d="M6,5.6C20,2.4 36,2.6 50,6C58,8.2 64,12 68,17C60,15.6 53,14.6 46,13.6C34,11.4 20,10.6 6,11Z" fill="#583a32" opacity=".92"/>
<path d="M10,5L22,7M20,4L34,8M32,5L46,10M44,7L58,13M16,8L30,10" stroke="#8a8078" stroke-width=".8" opacity=".6"/>
<path d="M19,36.5C21,33 24,29.5 28,26.6C33,23.4 38,21.8 44,21.6C50,21.4 56,22.4 61,24.2C66,26 70,28.6 74,32C77.5,35.4 80.5,39.5 82.5,44C78,45.6 72,46.8 66,47.6C60,49 55,49.8 50.5,49.8C45,49.6 40,48.6 35,46.4C30,44 26,41 23,38.2Z" fill="url(#sc)"/>
<g clip-path="url(#eo)"><circle cx="50.5" cy="35" r="14.6" fill="#3a3668"/><circle cx="50.5" cy="35" r="13" fill="url(#ir)"/>
<circle cx="51.8" cy="34.4" r="5" fill="#15131e"/><circle cx="54" cy="32.3" r="1.5" fill="#fff"/></g>
<path d="M16,40C18,36 22,31 28,26.8C33,23.4 38,21.6 44,21.4C50,21.2 56,22.2 61,24C66,26 70,28.6 74,32" stroke="#4a2e24" stroke-width="2.2" fill="none"/>
<path d="M15,41L20,33L25,27.6L31,23.6L38,21L46,20.4L40,25.6L33,29.6L27,34L21,39.6Z" fill="#4e3024" opacity=".85"/>
<path d="M26,25L30,19M31,23L35,17.5M37,21.5L40,17M20,31L24,25M16,38L19,31" stroke="#6a4030" stroke-width="1.3" opacity=".7"/>
<path d="M74,32C77.5,35.4 80.5,39.5 82.5,44" stroke="#c88462" stroke-width="1.8" fill="none"/>
<path d="M82.5,44C78,45.8 72,47 66,47.8C60,49.2 55,50 50.5,50C45,49.8 40,48.8 35,46.6C30,44.2 26,41.2 23,38.4" stroke="#e8a890" stroke-width="1.1" fill="none"/>
<path d="M30,50C38,54 50,56 62,54" stroke="#e4aa90" stroke-width="1.6" fill="none" opacity=".7"/><path d="M27,47L24,52M31,49.5L29,55M36,51.5L35,57M41,53L41,58M46,53.6L47,58" stroke="#e09c80" stroke-width="1" opacity=".6"/><path d="M79,42L82.5,44L80,46.5Z" fill="#f0a090"/></g><g clip-path="url(#rh)"><g filter="url(#nM)"><g filter="url(#bl)"><rect x="-2" y="-2" width="104" height="64" fill="url(#sk)"/>
<rect x="-2" y="-2" width="104" height="64" fill="url(#sk2)"/>
<ellipse cx="20" cy="30" rx="20" ry="13" fill="#d88c6c" opacity=".5" filter="url(#bl2)"/>
<ellipse cx="34" cy="18" rx="20" ry="5.5" fill="#fbd6c4" opacity=".7" filter="url(#bl3)"/><path d="M1,7C5,2.4 12,1 20,1.2C34,1.4 48,1.8 58,3C66,4.4 74,8.5 80,14C85,19 88.5,27 89.5,34C89.5,41 87,47 83.5,49C83,44 82,40 80.5,37C79,33.5 77,30.5 75,28.5C72,25.5 69,23 65,21C60,18.4 55,17 50,15.6C42,13.2 36,11.6 28,11C18,10.4 10,11.4 3,12Z" fill="url(#bg)"/>
<path d="M6,5.6C20,2.4 36,2.6 50,6C58,8.2 64,12 68,17C60,15.6 53,14.6 46,13.6C34,11.4 20,10.6 6,11Z" fill="#583a32" opacity=".92"/>
<path d="M10,5L22,7M20,4L34,8M32,5L46,10M44,7L58,13M16,8L30,10" stroke="#8a8078" stroke-width=".8" opacity=".6"/>
<path d="M19,36.5C21,33 24,29.5 28,26.6C33,23.4 38,21.8 44,21.6C50,21.4 56,22.4 61,24.2C66,26 70,28.6 74,32C77.5,35.4 80.5,39.5 82.5,44C78,45.6 72,46.8 66,47.6C60,49 55,49.8 50.5,49.8C45,49.6 40,48.6 35,46.4C30,44 26,41 23,38.2Z" fill="url(#sc)"/>
<g clip-path="url(#eo)"><circle cx="50.5" cy="35" r="14.6" fill="#3a3668"/><circle cx="50.5" cy="35" r="13" fill="url(#ir)"/>
<circle cx="51.8" cy="34.4" r="5" fill="#15131e"/><circle cx="54" cy="32.3" r="1.5" fill="#fff"/></g>
<path d="M16,40C18,36 22,31 28,26.8C33,23.4 38,21.6 44,21.4C50,21.2 56,22.2 61,24C66,26 70,28.6 74,32" stroke="#4a2e24" stroke-width="2.2" fill="none"/>
<path d="M15,41L20,33L25,27.6L31,23.6L38,21L46,20.4L40,25.6L33,29.6L27,34L21,39.6Z" fill="#4e3024" opacity=".85"/>
<path d="M26,25L30,19M31,23L35,17.5M37,21.5L40,17M20,31L24,25M16,38L19,31" stroke="#6a4030" stroke-width="1.3" opacity=".7"/>
<path d="M74,32C77.5,35.4 80.5,39.5 82.5,44" stroke="#c88462" stroke-width="1.8" fill="none"/>
<path d="M82.5,44C78,45.8 72,47 66,47.8C60,49.2 55,50 50.5,50C45,49.8 40,48.8 35,46.6C30,44.2 26,41.2 23,38.4" stroke="#e8a890" stroke-width="1.1" fill="none"/>
<path d="M30,50C38,54 50,56 62,54" stroke="#e4aa90" stroke-width="1.6" fill="none" opacity=".7"/><path d="M27,47L24,52M31,49.5L29,55M36,51.5L35,57M41,53L41,58M46,53.6L47,58" stroke="#e09c80" stroke-width="1" opacity=".6"/><path d="M79,42L82.5,44L80,46.5Z" fill="#f0a090"/></g></g></g></svg>
<span class="t" id="t51" style="left:510.5px;top:139.0px;line-height:16px;font-size:11px;color:#dcdcdc;transform:translateX(-50%);letter-spacing:-0.354px;">Medium</span>
<svg style="left:577px;top:73px;" width="100" height="60" viewBox="0 0 100 60"><g filter="url(#bl)"><rect x="-2" y="-2" width="104" height="64" fill="url(#sk)"/>
<rect x="-2" y="-2" width="104" height="64" fill="url(#sk2)"/>
<ellipse cx="20" cy="30" rx="20" ry="13" fill="#d88c6c" opacity=".5" filter="url(#bl2)"/>
<ellipse cx="34" cy="18" rx="20" ry="5.5" fill="#fbd6c4" opacity=".7" filter="url(#bl3)"/><path d="M1,7C5,2.4 12,1 20,1.2C34,1.4 48,1.8 58,3C66,4.4 74,8.5 80,14C85,19 88.5,27 89.5,34C89.5,41 87,47 83.5,49C83,44 82,40 80.5,37C79,33.5 77,30.5 75,28.5C72,25.5 69,23 65,21C60,18.4 55,17 50,15.6C42,13.2 36,11.6 28,11C18,10.4 10,11.4 3,12Z" fill="url(#bg)"/>
<path d="M6,5.6C20,2.4 36,2.6 50,6C58,8.2 64,12 68,17C60,15.6 53,14.6 46,13.6C34,11.4 20,10.6 6,11Z" fill="#583a32" opacity=".92"/>
<path d="M10,5L22,7M20,4L34,8M32,5L46,10M44,7L58,13M16,8L30,10" stroke="#8a8078" stroke-width=".8" opacity=".6"/>
<path d="M19,36.5C21,33 24,29.5 28,26.6C33,23.4 38,21.8 44,21.6C50,21.4 56,22.4 61,24.2C66,26 70,28.6 74,32C77.5,35.4 80.5,39.5 82.5,44C78,45.6 72,46.8 66,47.6C60,49 55,49.8 50.5,49.8C45,49.6 40,48.6 35,46.4C30,44 26,41 23,38.2Z" fill="url(#sc)"/>
<g clip-path="url(#eo)"><circle cx="50.5" cy="35" r="14.6" fill="#3a3668"/><circle cx="50.5" cy="35" r="13" fill="url(#ir)"/>
<circle cx="51.8" cy="34.4" r="5" fill="#15131e"/><circle cx="54" cy="32.3" r="1.5" fill="#fff"/></g>
<path d="M16,40C18,36 22,31 28,26.8C33,23.4 38,21.6 44,21.4C50,21.2 56,22.2 61,24C66,26 70,28.6 74,32" stroke="#4a2e24" stroke-width="2.2" fill="none"/>
<path d="M15,41L20,33L25,27.6L31,23.6L38,21L46,20.4L40,25.6L33,29.6L27,34L21,39.6Z" fill="#4e3024" opacity=".85"/>
<path d="M26,25L30,19M31,23L35,17.5M37,21.5L40,17M20,31L24,25M16,38L19,31" stroke="#6a4030" stroke-width="1.3" opacity=".7"/>
<path d="M74,32C77.5,35.4 80.5,39.5 82.5,44" stroke="#c88462" stroke-width="1.8" fill="none"/>
<path d="M82.5,44C78,45.8 72,47 66,47.8C60,49.2 55,50 50.5,50C45,49.8 40,48.8 35,46.6C30,44.2 26,41.2 23,38.4" stroke="#e8a890" stroke-width="1.1" fill="none"/>
<path d="M30,50C38,54 50,56 62,54" stroke="#e4aa90" stroke-width="1.6" fill="none" opacity=".7"/><path d="M27,47L24,52M31,49.5L29,55M36,51.5L35,57M41,53L41,58M46,53.6L47,58" stroke="#e09c80" stroke-width="1" opacity=".6"/><path d="M79,42L82.5,44L80,46.5Z" fill="#f0a090"/></g><g clip-path="url(#rh)"><g filter="url(#nG)"><g filter="url(#bl)"><rect x="-2" y="-2" width="104" height="64" fill="url(#sk)"/>
<rect x="-2" y="-2" width="104" height="64" fill="url(#sk2)"/>
<ellipse cx="20" cy="30" rx="20" ry="13" fill="#d88c6c" opacity=".5" filter="url(#bl2)"/>
<ellipse cx="34" cy="18" rx="20" ry="5.5" fill="#fbd6c4" opacity=".7" filter="url(#bl3)"/><path d="M1,7C5,2.4 12,1 20,1.2C34,1.4 48,1.8 58,3C66,4.4 74,8.5 80,14C85,19 88.5,27 89.5,34C89.5,41 87,47 83.5,49C83,44 82,40 80.5,37C79,33.5 77,30.5 75,28.5C72,25.5 69,23 65,21C60,18.4 55,17 50,15.6C42,13.2 36,11.6 28,11C18,10.4 10,11.4 3,12Z" fill="url(#bg)"/>
<path d="M6,5.6C20,2.4 36,2.6 50,6C58,8.2 64,12 68,17C60,15.6 53,14.6 46,13.6C34,11.4 20,10.6 6,11Z" fill="#583a32" opacity=".92"/>
<path d="M10,5L22,7M20,4L34,8M32,5L46,10M44,7L58,13M16,8L30,10" stroke="#8a8078" stroke-width=".8" opacity=".6"/>
<path d="M19,36.5C21,33 24,29.5 28,26.6C33,23.4 38,21.8 44,21.6C50,21.4 56,22.4 61,24.2C66,26 70,28.6 74,32C77.5,35.4 80.5,39.5 82.5,44C78,45.6 72,46.8 66,47.6C60,49 55,49.8 50.5,49.8C45,49.6 40,48.6 35,46.4C30,44 26,41 23,38.2Z" fill="url(#sc)"/>
<g clip-path="url(#eo)"><circle cx="50.5" cy="35" r="14.6" fill="#3a3668"/><circle cx="50.5" cy="35" r="13" fill="url(#ir)"/>
<circle cx="51.8" cy="34.4" r="5" fill="#15131e"/><circle cx="54" cy="32.3" r="1.5" fill="#fff"/></g>
<path d="M16,40C18,36 22,31 28,26.8C33,23.4 38,21.6 44,21.4C50,21.2 56,22.2 61,24C66,26 70,28.6 74,32" stroke="#4a2e24" stroke-width="2.2" fill="none"/>
<path d="M15,41L20,33L25,27.6L31,23.6L38,21L46,20.4L40,25.6L33,29.6L27,34L21,39.6Z" fill="#4e3024" opacity=".85"/>
<path d="M26,25L30,19M31,23L35,17.5M37,21.5L40,17M20,31L24,25M16,38L19,31" stroke="#6a4030" stroke-width="1.3" opacity=".7"/>
<path d="M74,32C77.5,35.4 80.5,39.5 82.5,44" stroke="#c88462" stroke-width="1.8" fill="none"/>
<path d="M82.5,44C78,45.8 72,47 66,47.8C60,49.2 55,50 50.5,50C45,49.8 40,48.8 35,46.6C30,44.2 26,41.2 23,38.4" stroke="#e8a890" stroke-width="1.1" fill="none"/>
<path d="M30,50C38,54 50,56 62,54" stroke="#e4aa90" stroke-width="1.6" fill="none" opacity=".7"/><path d="M27,47L24,52M31,49.5L29,55M36,51.5L35,57M41,53L41,58M46,53.6L47,58" stroke="#e09c80" stroke-width="1" opacity=".6"/><path d="M79,42L82.5,44L80,46.5Z" fill="#f0a090"/></g></g></g></svg>
<span class="t" id="t52" style="left:626.5px;top:139.0px;line-height:16px;font-size:11px;color:#dcdcdc;transform:translateX(-50%);letter-spacing:-0.234px;">Grainy</span>
<svg style="left:693px;top:73px;" width="100" height="60" viewBox="0 0 100 60"><g filter="url(#bl)"><rect x="-2" y="-2" width="104" height="64" fill="url(#sk)"/>
<rect x="-2" y="-2" width="104" height="64" fill="url(#sk2)"/>
<ellipse cx="20" cy="30" rx="20" ry="13" fill="#d88c6c" opacity=".5" filter="url(#bl2)"/>
<ellipse cx="34" cy="18" rx="20" ry="5.5" fill="#fbd6c4" opacity=".7" filter="url(#bl3)"/><path d="M1,7C5,2.4 12,1 20,1.2C34,1.4 48,1.8 58,3C66,4.4 74,8.5 80,14C85,19 88.5,27 89.5,34C89.5,41 87,47 83.5,49C83,44 82,40 80.5,37C79,33.5 77,30.5 75,28.5C72,25.5 69,23 65,21C60,18.4 55,17 50,15.6C42,13.2 36,11.6 28,11C18,10.4 10,11.4 3,12Z" fill="url(#bg)"/>
<path d="M6,5.6C20,2.4 36,2.6 50,6C58,8.2 64,12 68,17C60,15.6 53,14.6 46,13.6C34,11.4 20,10.6 6,11Z" fill="#583a32" opacity=".92"/>
<path d="M10,5L22,7M20,4L34,8M32,5L46,10M44,7L58,13M16,8L30,10" stroke="#8a8078" stroke-width=".8" opacity=".6"/>
<path d="M19,36.5C21,33 24,29.5 28,26.6C33,23.4 38,21.8 44,21.6C50,21.4 56,22.4 61,24.2C66,26 70,28.6 74,32C77.5,35.4 80.5,39.5 82.5,44C78,45.6 72,46.8 66,47.6C60,49 55,49.8 50.5,49.8C45,49.6 40,48.6 35,46.4C30,44 26,41 23,38.2Z" fill="url(#sc)"/>
<g clip-path="url(#eo)"><circle cx="50.5" cy="35" r="14.6" fill="#3a3668"/><circle cx="50.5" cy="35" r="13" fill="url(#ir)"/>
<circle cx="51.8" cy="34.4" r="5" fill="#15131e"/><circle cx="54" cy="32.3" r="1.5" fill="#fff"/></g>
<path d="M16,40C18,36 22,31 28,26.8C33,23.4 38,21.6 44,21.4C50,21.2 56,22.2 61,24C66,26 70,28.6 74,32" stroke="#4a2e24" stroke-width="2.2" fill="none"/>
<path d="M15,41L20,33L25,27.6L31,23.6L38,21L46,20.4L40,25.6L33,29.6L27,34L21,39.6Z" fill="#4e3024" opacity=".85"/>
<path d="M26,25L30,19M31,23L35,17.5M37,21.5L40,17M20,31L24,25M16,38L19,31" stroke="#6a4030" stroke-width="1.3" opacity=".7"/>
<path d="M74,32C77.5,35.4 80.5,39.5 82.5,44" stroke="#c88462" stroke-width="1.8" fill="none"/>
<path d="M82.5,44C78,45.8 72,47 66,47.8C60,49.2 55,50 50.5,50C45,49.8 40,48.8 35,46.6C30,44.2 26,41.2 23,38.4" stroke="#e8a890" stroke-width="1.1" fill="none"/>
<path d="M30,50C38,54 50,56 62,54" stroke="#e4aa90" stroke-width="1.6" fill="none" opacity=".7"/><path d="M27,47L24,52M31,49.5L29,55M36,51.5L35,57M41,53L41,58M46,53.6L47,58" stroke="#e09c80" stroke-width="1" opacity=".6"/><path d="M79,42L82.5,44L80,46.5Z" fill="#f0a090"/></g><g clip-path="url(#rh)"><g filter="url(#nE)"><g filter="url(#bl)"><rect x="-2" y="-2" width="104" height="64" fill="url(#sk)"/>
<rect x="-2" y="-2" width="104" height="64" fill="url(#sk2)"/>
<ellipse cx="20" cy="30" rx="20" ry="13" fill="#d88c6c" opacity=".5" filter="url(#bl2)"/>
<ellipse cx="34" cy="18" rx="20" ry="5.5" fill="#fbd6c4" opacity=".7" filter="url(#bl3)"/><path d="M1,7C5,2.4 12,1 20,1.2C34,1.4 48,1.8 58,3C66,4.4 74,8.5 80,14C85,19 88.5,27 89.5,34C89.5,41 87,47 83.5,49C83,44 82,40 80.5,37C79,33.5 77,30.5 75,28.5C72,25.5 69,23 65,21C60,18.4 55,17 50,15.6C42,13.2 36,11.6 28,11C18,10.4 10,11.4 3,12Z" fill="url(#bg)"/>
<path d="M6,5.6C20,2.4 36,2.6 50,6C58,8.2 64,12 68,17C60,15.6 53,14.6 46,13.6C34,11.4 20,10.6 6,11Z" fill="#583a32" opacity=".92"/>
<path d="M10,5L22,7M20,4L34,8M32,5L46,10M44,7L58,13M16,8L30,10" stroke="#8a8078" stroke-width=".8" opacity=".6"/>
<path d="M19,36.5C21,33 24,29.5 28,26.6C33,23.4 38,21.8 44,21.6C50,21.4 56,22.4 61,24.2C66,26 70,28.6 74,32C77.5,35.4 80.5,39.5 82.5,44C78,45.6 72,46.8 66,47.6C60,49 55,49.8 50.5,49.8C45,49.6 40,48.6 35,46.4C30,44 26,41 23,38.2Z" fill="url(#sc)"/>
<g clip-path="url(#eo)"><circle cx="50.5" cy="35" r="14.6" fill="#3a3668"/><circle cx="50.5" cy="35" r="13" fill="url(#ir)"/>
<circle cx="51.8" cy="34.4" r="5" fill="#15131e"/><circle cx="54" cy="32.3" r="1.5" fill="#fff"/></g>
<path d="M16,40C18,36 22,31 28,26.8C33,23.4 38,21.6 44,21.4C50,21.2 56,22.2 61,24C66,26 70,28.6 74,32" stroke="#4a2e24" stroke-width="2.2" fill="none"/>
<path d="M15,41L20,33L25,27.6L31,23.6L38,21L46,20.4L40,25.6L33,29.6L27,34L21,39.6Z" fill="#4e3024" opacity=".85"/>
<path d="M26,25L30,19M31,23L35,17.5M37,21.5L40,17M20,31L24,25M16,38L19,31" stroke="#6a4030" stroke-width="1.3" opacity=".7"/>
<path d="M74,32C77.5,35.4 80.5,39.5 82.5,44" stroke="#c88462" stroke-width="1.8" fill="none"/>
<path d="M82.5,44C78,45.8 72,47 66,47.8C60,49.2 55,50 50.5,50C45,49.8 40,48.8 35,46.6C30,44.2 26,41.2 23,38.4" stroke="#e8a890" stroke-width="1.1" fill="none"/>
<path d="M30,50C38,54 50,56 62,54" stroke="#e4aa90" stroke-width="1.6" fill="none" opacity=".7"/><path d="M27,47L24,52M31,49.5L29,55M36,51.5L35,57M41,53L41,58M46,53.6L47,58" stroke="#e09c80" stroke-width="1" opacity=".6"/><path d="M79,42L82.5,44L80,46.5Z" fill="#f0a090"/></g></g></g></svg>
<span class="t" id="t53" style="left:742.5px;top:139.0px;line-height:16px;font-size:11px;color:#dcdcdc;transform:translateX(-50%);letter-spacing:0.004px;">Extreme</span>
<svg style="left:809px;top:73px;" width="100" height="60" viewBox="0 0 100 60"><g filter="url(#bl)"><rect x="-2" y="-2" width="104" height="64" fill="url(#sk)"/>
<rect x="-2" y="-2" width="104" height="64" fill="url(#sk2)"/>
<ellipse cx="20" cy="30" rx="20" ry="13" fill="#d88c6c" opacity=".5" filter="url(#bl2)"/>
<ellipse cx="34" cy="18" rx="20" ry="5.5" fill="#fbd6c4" opacity=".7" filter="url(#bl3)"/><path d="M1,7C5,2.4 12,1 20,1.2C34,1.4 48,1.8 58,3C66,4.4 74,8.5 80,14C85,19 88.5,27 89.5,34C89.5,41 87,47 83.5,49C83,44 82,40 80.5,37C79,33.5 77,30.5 75,28.5C72,25.5 69,23 65,21C60,18.4 55,17 50,15.6C42,13.2 36,11.6 28,11C18,10.4 10,11.4 3,12Z" fill="url(#bg)"/>
<path d="M6,5.6C20,2.4 36,2.6 50,6C58,8.2 64,12 68,17C60,15.6 53,14.6 46,13.6C34,11.4 20,10.6 6,11Z" fill="#583a32" opacity=".92"/>
<path d="M10,5L22,7M20,4L34,8M32,5L46,10M44,7L58,13M16,8L30,10" stroke="#8a8078" stroke-width=".8" opacity=".6"/>
<path d="M19,36.5C21,33 24,29.5 28,26.6C33,23.4 38,21.8 44,21.6C50,21.4 56,22.4 61,24.2C66,26 70,28.6 74,32C77.5,35.4 80.5,39.5 82.5,44C78,45.6 72,46.8 66,47.6C60,49 55,49.8 50.5,49.8C45,49.6 40,48.6 35,46.4C30,44 26,41 23,38.2Z" fill="url(#sc)"/>
<g clip-path="url(#eo)"><circle cx="50.5" cy="35" r="14.6" fill="#3a3668"/><circle cx="50.5" cy="35" r="13" fill="url(#ir)"/>
<circle cx="51.8" cy="34.4" r="5" fill="#15131e"/><circle cx="54" cy="32.3" r="1.5" fill="#fff"/></g>
<path d="M16,40C18,36 22,31 28,26.8C33,23.4 38,21.6 44,21.4C50,21.2 56,22.2 61,24C66,26 70,28.6 74,32" stroke="#4a2e24" stroke-width="2.2" fill="none"/>
<path d="M15,41L20,33L25,27.6L31,23.6L38,21L46,20.4L40,25.6L33,29.6L27,34L21,39.6Z" fill="#4e3024" opacity=".85"/>
<path d="M26,25L30,19M31,23L35,17.5M37,21.5L40,17M20,31L24,25M16,38L19,31" stroke="#6a4030" stroke-width="1.3" opacity=".7"/>
<path d="M74,32C77.5,35.4 80.5,39.5 82.5,44" stroke="#c88462" stroke-width="1.8" fill="none"/>
<path d="M82.5,44C78,45.8 72,47 66,47.8C60,49.2 55,50 50.5,50C45,49.8 40,48.8 35,46.6C30,44.2 26,41.2 23,38.4" stroke="#e8a890" stroke-width="1.1" fill="none"/>
<path d="M30,50C38,54 50,56 62,54" stroke="#e4aa90" stroke-width="1.6" fill="none" opacity=".7"/><path d="M27,47L24,52M31,49.5L29,55M36,51.5L35,57M41,53L41,58M46,53.6L47,58" stroke="#e09c80" stroke-width="1" opacity=".6"/><path d="M79,42L82.5,44L80,46.5Z" fill="#f0a090"/></g><g clip-path="url(#rh)"><g filter="url(#nC)"><g filter="url(#bl)"><rect x="-2" y="-2" width="104" height="64" fill="url(#sk)"/>
<rect x="-2" y="-2" width="104" height="64" fill="url(#sk2)"/>
<ellipse cx="20" cy="30" rx="20" ry="13" fill="#d88c6c" opacity=".5" filter="url(#bl2)"/>
<ellipse cx="34" cy="18" rx="20" ry="5.5" fill="#fbd6c4" opacity=".7" filter="url(#bl3)"/><path d="M1,7C5,2.4 12,1 20,1.2C34,1.4 48,1.8 58,3C66,4.4 74,8.5 80,14C85,19 88.5,27 89.5,34C89.5,41 87,47 83.5,49C83,44 82,40 80.5,37C79,33.5 77,30.5 75,28.5C72,25.5 69,23 65,21C60,18.4 55,17 50,15.6C42,13.2 36,11.6 28,11C18,10.4 10,11.4 3,12Z" fill="url(#bg)"/>
<path d="M6,5.6C20,2.4 36,2.6 50,6C58,8.2 64,12 68,17C60,15.6 53,14.6 46,13.6C34,11.4 20,10.6 6,11Z" fill="#583a32" opacity=".92"/>
<path d="M10,5L22,7M20,4L34,8M32,5L46,10M44,7L58,13M16,8L30,10" stroke="#8a8078" stroke-width=".8" opacity=".6"/>
<path d="M19,36.5C21,33 24,29.5 28,26.6C33,23.4 38,21.8 44,21.6C50,21.4 56,22.4 61,24.2C66,26 70,28.6 74,32C77.5,35.4 80.5,39.5 82.5,44C78,45.6 72,46.8 66,47.6C60,49 55,49.8 50.5,49.8C45,49.6 40,48.6 35,46.4C30,44 26,41 23,38.2Z" fill="url(#sc)"/>
<g clip-path="url(#eo)"><circle cx="50.5" cy="35" r="14.6" fill="#3a3668"/><circle cx="50.5" cy="35" r="13" fill="url(#ir)"/>
<circle cx="51.8" cy="34.4" r="5" fill="#15131e"/><circle cx="54" cy="32.3" r="1.5" fill="#fff"/></g>
<path d="M16,40C18,36 22,31 28,26.8C33,23.4 38,21.6 44,21.4C50,21.2 56,22.2 61,24C66,26 70,28.6 74,32" stroke="#4a2e24" stroke-width="2.2" fill="none"/>
<path d="M15,41L20,33L25,27.6L31,23.6L38,21L46,20.4L40,25.6L33,29.6L27,34L21,39.6Z" fill="#4e3024" opacity=".85"/>
<path d="M26,25L30,19M31,23L35,17.5M37,21.5L40,17M20,31L24,25M16,38L19,31" stroke="#6a4030" stroke-width="1.3" opacity=".7"/>
<path d="M74,32C77.5,35.4 80.5,39.5 82.5,44" stroke="#c88462" stroke-width="1.8" fill="none"/>
<path d="M82.5,44C78,45.8 72,47 66,47.8C60,49.2 55,50 50.5,50C45,49.8 40,48.8 35,46.6C30,44.2 26,41.2 23,38.4" stroke="#e8a890" stroke-width="1.1" fill="none"/>
<path d="M30,50C38,54 50,56 62,54" stroke="#e4aa90" stroke-width="1.6" fill="none" opacity=".7"/><path d="M27,47L24,52M31,49.5L29,55M36,51.5L35,57M41,53L41,58M46,53.6L47,58" stroke="#e09c80" stroke-width="1" opacity=".6"/><path d="M79,42L82.5,44L80,46.5Z" fill="#f0a090"/></g></g></g></svg>
<span class="t" id="t54" style="left:858.5px;top:139.0px;line-height:16px;font-size:11px;color:#dcdcdc;transform:translateX(-50%);letter-spacing:-0.059px;">Color</span>
<svg style="left:925px;top:73px;" width="100" height="60" viewBox="0 0 100 60"><g filter="url(#bl)"><rect x="-2" y="-2" width="104" height="64" fill="url(#sk)"/>
<rect x="-2" y="-2" width="104" height="64" fill="url(#sk2)"/>
<ellipse cx="20" cy="30" rx="20" ry="13" fill="#d88c6c" opacity=".5" filter="url(#bl2)"/>
<ellipse cx="34" cy="18" rx="20" ry="5.5" fill="#fbd6c4" opacity=".7" filter="url(#bl3)"/><path d="M1,7C5,2.4 12,1 20,1.2C34,1.4 48,1.8 58,3C66,4.4 74,8.5 80,14C85,19 88.5,27 89.5,34C89.5,41 87,47 83.5,49C83,44 82,40 80.5,37C79,33.5 77,30.5 75,28.5C72,25.5 69,23 65,21C60,18.4 55,17 50,15.6C42,13.2 36,11.6 28,11C18,10.4 10,11.4 3,12Z" fill="url(#bg)"/>
<path d="M6,5.6C20,2.4 36,2.6 50,6C58,8.2 64,12 68,17C60,15.6 53,14.6 46,13.6C34,11.4 20,10.6 6,11Z" fill="#583a32" opacity=".92"/>
<path d="M10,5L22,7M20,4L34,8M32,5L46,10M44,7L58,13M16,8L30,10" stroke="#8a8078" stroke-width=".8" opacity=".6"/>
<path d="M19,36.5C21,33 24,29.5 28,26.6C33,23.4 38,21.8 44,21.6C50,21.4 56,22.4 61,24.2C66,26 70,28.6 74,32C77.5,35.4 80.5,39.5 82.5,44C78,45.6 72,46.8 66,47.6C60,49 55,49.8 50.5,49.8C45,49.6 40,48.6 35,46.4C30,44 26,41 23,38.2Z" fill="url(#sc)"/>
<g clip-path="url(#eo)"><circle cx="50.5" cy="35" r="14.6" fill="#3a3668"/><circle cx="50.5" cy="35" r="13" fill="url(#ir)"/>
<circle cx="51.8" cy="34.4" r="5" fill="#15131e"/><circle cx="54" cy="32.3" r="1.5" fill="#fff"/></g>
<path d="M16,40C18,36 22,31 28,26.8C33,23.4 38,21.6 44,21.4C50,21.2 56,22.2 61,24C66,26 70,28.6 74,32" stroke="#4a2e24" stroke-width="2.2" fill="none"/>
<path d="M15,41L20,33L25,27.6L31,23.6L38,21L46,20.4L40,25.6L33,29.6L27,34L21,39.6Z" fill="#4e3024" opacity=".85"/>
<path d="M26,25L30,19M31,23L35,17.5M37,21.5L40,17M20,31L24,25M16,38L19,31" stroke="#6a4030" stroke-width="1.3" opacity=".7"/>
<path d="M74,32C77.5,35.4 80.5,39.5 82.5,44" stroke="#c88462" stroke-width="1.8" fill="none"/>
<path d="M82.5,44C78,45.8 72,47 66,47.8C60,49.2 55,50 50.5,50C45,49.8 40,48.8 35,46.6C30,44.2 26,41.2 23,38.4" stroke="#e8a890" stroke-width="1.1" fill="none"/>
<path d="M30,50C38,54 50,56 62,54" stroke="#e4aa90" stroke-width="1.6" fill="none" opacity=".7"/><path d="M27,47L24,52M31,49.5L29,55M36,51.5L35,57M41,53L41,58M46,53.6L47,58" stroke="#e09c80" stroke-width="1" opacity=".6"/><path d="M79,42L82.5,44L80,46.5Z" fill="#f0a090"/></g><g clip-path="url(#rh)"><g filter="url(#nS)"><g filter="url(#bl)"><rect x="-2" y="-2" width="104" height="64" fill="url(#sk)"/>
<rect x="-2" y="-2" width="104" height="64" fill="url(#sk2)"/>
<ellipse cx="20" cy="30" rx="20" ry="13" fill="#d88c6c" opacity=".5" filter="url(#bl2)"/>
<ellipse cx="34" cy="18" rx="20" ry="5.5" fill="#fbd6c4" opacity=".7" filter="url(#bl3)"/><path d="M1,7C5,2.4 12,1 20,1.2C34,1.4 48,1.8 58,3C66,4.4 74,8.5 80,14C85,19 88.5,27 89.5,34C89.5,41 87,47 83.5,49C83,44 82,40 80.5,37C79,33.5 77,30.5 75,28.5C72,25.5 69,23 65,21C60,18.4 55,17 50,15.6C42,13.2 36,11.6 28,11C18,10.4 10,11.4 3,12Z" fill="url(#bg)"/>
<path d="M6,5.6C20,2.4 36,2.6 50,6C58,8.2 64,12 68,17C60,15.6 53,14.6 46,13.6C34,11.4 20,10.6 6,11Z" fill="#583a32" opacity=".92"/>
<path d="M10,5L22,7M20,4L34,8M32,5L46,10M44,7L58,13M16,8L30,10" stroke="#8a8078" stroke-width=".8" opacity=".6"/>
<path d="M19,36.5C21,33 24,29.5 28,26.6C33,23.4 38,21.8 44,21.6C50,21.4 56,22.4 61,24.2C66,26 70,28.6 74,32C77.5,35.4 80.5,39.5 82.5,44C78,45.6 72,46.8 66,47.6C60,49 55,49.8 50.5,49.8C45,49.6 40,48.6 35,46.4C30,44 26,41 23,38.2Z" fill="url(#sc)"/>
<g clip-path="url(#eo)"><circle cx="50.5" cy="35" r="14.6" fill="#3a3668"/><circle cx="50.5" cy="35" r="13" fill="url(#ir)"/>
<circle cx="51.8" cy="34.4" r="5" fill="#15131e"/><circle cx="54" cy="32.3" r="1.5" fill="#fff"/></g>
<path d="M16,40C18,36 22,31 28,26.8C33,23.4 38,21.6 44,21.4C50,21.2 56,22.2 61,24C66,26 70,28.6 74,32" stroke="#4a2e24" stroke-width="2.2" fill="none"/>
<path d="M15,41L20,33L25,27.6L31,23.6L38,21L46,20.4L40,25.6L33,29.6L27,34L21,39.6Z" fill="#4e3024" opacity=".85"/>
<path d="M26,25L30,19M31,23L35,17.5M37,21.5L40,17M20,31L24,25M16,38L19,31" stroke="#6a4030" stroke-width="1.3" opacity=".7"/>
<path d="M74,32C77.5,35.4 80.5,39.5 82.5,44" stroke="#c88462" stroke-width="1.8" fill="none"/>
<path d="M82.5,44C78,45.8 72,47 66,47.8C60,49.2 55,50 50.5,50C45,49.8 40,48.8 35,46.6C30,44.2 26,41.2 23,38.4" stroke="#e8a890" stroke-width="1.1" fill="none"/>
<path d="M30,50C38,54 50,56 62,54" stroke="#e4aa90" stroke-width="1.6" fill="none" opacity=".7"/><path d="M27,47L24,52M31,49.5L29,55M36,51.5L35,57M41,53L41,58M46,53.6L47,58" stroke="#e09c80" stroke-width="1" opacity=".6"/><path d="M79,42L82.5,44L80,46.5Z" fill="#f0a090"/></g></g></g></svg>
<span class="t" id="t55" style="left:974.5px;top:139.0px;line-height:16px;font-size:11px;color:#dcdcdc;transform:translateX(-50%);letter-spacing:0.023px;">Screen</span>
<div style="left:1px;top:437px;width:102px;height:16px;background:#363636;"></div>
<div style="left:1px;top:452px;width:102px;height:1px;background:#303030;"></div>
<span class="t" id="t56" style="left:8px;top:436.0px;line-height:16px;font-size:11px;color:#dcdcdc;letter-spacing:-0.126px;">Transitions</span>
<div style="left:104px;top:437px;width:115px;height:16px;background:#363636;"></div>
<div style="left:104px;top:452px;width:115px;height:1px;background:#303030;"></div>
<span class="t" id="t57" style="left:111px;top:436.0px;line-height:16px;font-size:11px;color:#dcdcdc;letter-spacing:-0.097px;">Project Media</span>
<div style="left:220px;top:436px;width:91px;height:17px;background:#464646;"></div>
<span class="t" id="t58" style="left:227px;top:436.0px;line-height:16px;font-size:11px;color:#dcdcdc;letter-spacing:-0.508px;">Video FX</span>
<div style="left:312px;top:437px;width:135px;height:16px;background:#363636;"></div>
<div style="left:312px;top:452px;width:135px;height:1px;background:#303030;"></div>
<span class="t" id="t59" style="left:319px;top:436.0px;line-height:16px;font-size:11px;color:#dcdcdc;letter-spacing:-0.128px;">Media Generators</span>
<div style="left:448px;top:437px;width:90px;height:16px;background:#363636;"></div>
<div style="left:448px;top:452px;width:90px;height:1px;background:#303030;"></div>
<span class="t" id="t60" style="left:455px;top:436.0px;line-height:16px;font-size:11px;color:#dcdcdc;letter-spacing:-0.121px;">Explorer</span>
<svg style="left:276px;top:440px;" width="10" height="10" viewBox="0 0 10 10"><rect x="0.5" y="1" width="8" height="7.5" fill="none" stroke="#f0f0f0" stroke-width="1"/><rect x="0" y="0" width="9" height="2" fill="#f0f0f0"/></svg>
<svg style="left:294px;top:440px;" width="10" height="10" viewBox="0 0 10 10"><path d="M1.2,1.8L7.8,8.4M7.8,1.8L1.2,8.4" stroke="#f0f0f0" stroke-width="2"/></svg>
<div style="left:1278px;top:34px;width:629px;height:1px;background:#868686;"></div>
<div style="left:1278px;top:35px;width:629px;height:29px;background:#464646;"></div>
<div style="left:1278px;top:64px;width:629px;height:311px;background:#2d2d2d;"></div>
<div style="left:1316px;top:64px;width:553px;height:311px;background:#000;"></div>
<div style="left:1278px;top:375px;width:629px;height:1px;background:#868686;"></div>
<div style="left:1278px;top:376px;width:629px;height:60px;background:#464646;"></div>
<svg style="left:1282px;top:42px;" width="16" height="16" viewBox="0 0 16 16"><path d="M15.40,7.79L14.85,10.50L12.82,10.13L12.07,11.25L13.17,12.99L10.86,14.52L9.69,12.83L8.36,13.09L7.91,15.10L5.20,14.55L5.57,12.52L4.45,11.77L2.71,12.87L1.18,10.56L2.87,9.39L2.61,8.06L0.60,7.61L1.15,4.90L3.18,5.27L3.93,4.15L2.83,2.41L5.14,0.88L6.31,2.57L7.64,2.31L8.09,0.30L10.80,0.85L10.43,2.88L11.55,3.63L13.29,2.53L14.82,4.84L13.13,6.01L13.39,7.34Z" fill="#f0f0f0" stroke="#1c1c24" stroke-linejoin="round"/><circle cx="8" cy="7.7" r="2.6" fill="#464646" stroke="#1c1c24"/></svg>
<svg style="left:1306px;top:42px;" width="17" height="16" viewBox="0 0 17 16"><rect x="5.9" y="0.8" width="9.9" height="9.8" rx="0.8" fill="#f0f0f0" stroke="#1c1c24" stroke-width="0.7"/><rect x="8" y="3.2" width="5.6" height="3.8" fill="#6ec0e6"/><rect x="12.4" y="10.2" width="3.2" height="2" fill="#f0f0f0" stroke="#1c1c24" stroke-width="0.5"/><rect x="3.4" y="7" width="8.8" height="6.4" rx="0.6" fill="#f0f0f0" stroke="#1c1c24" stroke-width="0.7"/><rect x="5.2" y="8.6" width="4.8" height="2.8" fill="#6ec0e6"/><path d="M2.4,13.2H12.6L13.8,15.6H0.6Z" fill="#f0f0f0" stroke="#1c1c24" stroke-width="0.7"/><rect x="5.6" y="14.2" width="3.2" height="0.7" fill="#1c1c24"/></svg>
<span class="t" id="t61" style="left:1331.5px;top:41.0px;line-height:16px;font-size:16px;color:#f4f4f4;font-weight:bold;font-family:'Liberation Serif',serif;font-style:italic;line-height:20px;margin-top:-2px;letter-spacing:-0.8px;text-shadow:0 0 1px #1c1c24;">fx</span>
<svg style="left:1354px;top:42px;" width="16" height="16" viewBox="0 0 16 16"><rect x="0.3" y="1.6" width="15.4" height="11.8" rx="1" fill="#1c1c24"/><rect x="1.2" y="2.5" width="6" height="10" fill="none" stroke="#f0f0f0" stroke-width="1.1"/><rect x="8.5" y="2.4" width="6.4" height="10.2" fill="#f0f0f0"/><path d="M7.2,4.6A3,3 0 0 0 7.2,10.6Z" fill="#f0f0f0"/><path d="M8.6,4.6A3,3 0 0 1 8.6,10.6Z" fill="#1e1e1e"/><rect x="6.7" y="0.2" width="2.2" height="15.2" fill="#1c1c24"/><rect x="7.2" y="0.6" width="1.2" height="14.4" fill="#f0f0f0"/></svg>
<svg style="left:1377.5px;top:48px;" width="8" height="5" viewBox="0 0 8 5"><path d="M0,0H7.6L3.8,4.4Z" fill="#e6e6e6"/></svg>
<span class="t" id="t62" style="left:1391px;top:41.5px;line-height:16px;font-size:11px;color:#dcdcdc;letter-spacing:0.347px;">Preview (Auto)</span>
<svg style="left:1477.5px;top:48px;" width="8" height="5" viewBox="0 0 8 5"><path d="M0,0H7.6L3.8,4.4Z" fill="#e6e6e6"/></svg>
<svg style="left:1493.5px;top:42px;" width="16" height="16" viewBox="0 0 16 16"><rect x="1" y="1" width="14" height="14" rx="2" fill="#1c1c24"/><rect x="1.9500000000000002" y="0.3" width="1.3" height="15.4" fill="#f0f0f0"/><rect x="0.3" y="1.9500000000000002" width="15.4" height="1.3" fill="#f0f0f0"/><rect x="5.55" y="0.3" width="1.3" height="15.4" fill="#f0f0f0"/><rect x="0.3" y="5.55" width="15.4" height="1.3" fill="#f0f0f0"/><rect x="9.15" y="0.3" width="1.3" height="15.4" fill="#f0f0f0"/><rect x="0.3" y="9.15" width="15.4" height="1.3" fill="#f0f0f0"/><rect x="12.75" y="0.3" width="1.3" height="15.4" fill="#f0f0f0"/><rect x="0.3" y="12.75" width="15.4" height="1.3" fill="#f0f0f0"/></svg>
<svg style="left:1516.5px;top:48px;" width="8" height="5" viewBox="0 0 8 5"><path d="M0,0H7.6L3.8,4.4Z" fill="#e6e6e6"/></svg>
<svg style="left:1532px;top:42px;" width="16" height="16" viewBox="0 0 16 16"><path d="M0.5,0.5H5.5L8.5,3.5V11.0H0.5Z" fill="#78bedc" stroke="#1c1c24"/><path d="M7,4.5H12L15,7.5V15.5H7Z" fill="#f0f0f0" stroke="#1c1c24"/><path d="M11.5,6.0V8.0H13.5" fill="none" stroke="#1c1c24" stroke-width="0.9"/></svg>
<svg style="left:1556px;top:42px;" width="16" height="16" viewBox="0 0 16 16"><rect x="0.5" y="0.5" width="15" height="15" fill="#7ec0de" stroke="#1c1c24"/><rect x="4.5" y="0.5" width="7" height="6" fill="#f0f0f0" stroke="#1c1c24"/><rect x="3.5" y="9.5" width="9" height="6" fill="#f0f0f0" stroke="#1c1c24"/><rect x="6" y="11.5" width="2" height="4" fill="#000"/></svg>
<svg style="left:1554px;top:382px;" width="16" height="18" viewBox="0 0 16 18"><path d="M2,2L13.4,9L2,16.5Z" fill="#f0f0f0" stroke="#1c1c24" stroke-linejoin="round"/></svg>
<svg style="left:1577px;top:383px;" width="16" height="16" viewBox="0 0 16 16"><rect x="1.5" y="1.5" width="5" height="13" rx="0.8" fill="#f0f0f0" stroke="#1c1c24"/><rect x="9.5" y="1.5" width="5" height="13" rx="0.8" fill="#f0f0f0" stroke="#1c1c24"/></svg>
<svg style="left:1601px;top:383px;" width="16" height="16" viewBox="0 0 16 16"><rect x="1.5" y="1.5" width="13" height="13" rx="0.8" fill="#f0f0f0" stroke="#1c1c24"/></svg>
<svg style="left:1620px;top:383px;" width="16" height="16" viewBox="0 0 16 16"><rect x="1.5" y="1.5" width="13" height="3" rx="1" fill="#f0f0f0" stroke="#1c1c24"/><rect x="1.5" y="6.5" width="13" height="3" rx="1" fill="#f0f0f0" stroke="#1c1c24"/><rect x="1.5" y="11.5" width="13" height="3" rx="1" fill="#f0f0f0" stroke="#1c1c24"/></svg>
<span class="t" id="t63" style="left:1281px;top:408.0px;line-height:16px;font-size:11px;color:#dcdcdc;letter-spacing:0.088px;">Project:</span>
<span class="t" id="t64" style="left:1328px;top:408.0px;line-height:16px;font-size:11px;color:#dcdcdc;letter-spacing:-0.019px;">1920x1080x32, 29.970i</span>
<span class="t" id="t65" style="left:1281px;top:421.0px;line-height:16px;font-size:11px;color:#dcdcdc;letter-spacing:-0.023px;">Preview:</span>
<span class="t" id="t66" style="left:1328px;top:421.0px;line-height:16px;font-size:11px;color:#f69a98;letter-spacing:0.062px;">480x270x32, 29.970p</span>
<span class="t" id="t67" style="left:1595px;top:408.0px;line-height:16px;font-size:11px;color:#dcdcdc;letter-spacing:-0.141px;">Frame:</span>
<span class="t" id="t68" style="left:1641px;top:408.0px;line-height:16px;font-size:11px;color:#dcdcdc;letter-spacing:-0.125px;">0</span>
<span class="t" id="t69" style="left:1595px;top:421.0px;line-height:16px;font-size:11px;color:#dcdcdc;letter-spacing:-0.141px;">Display:</span>
<span class="t" id="t70" style="left:1641px;top:421.0px;line-height:16px;font-size:11px;color:#f69a98;letter-spacing:0.087px;">553x311x32</span>
<div style="left:1278px;top:436px;width:117px;height:17px;background:#464646;"></div>
<span class="t" id="t71" style="left:1285px;top:436.0px;line-height:16px;font-size:11px;color:#dcdcdc;letter-spacing:-0.240px;">Video Preview</span>
<div style="left:1396px;top:437px;width:87px;height:16px;background:#363636;"></div>
<div style="left:1396px;top:452px;width:87px;height:1px;background:#303030;"></div>
<span class="t" id="t72" style="left:1403px;top:436.0px;line-height:16px;font-size:11px;color:#dcdcdc;letter-spacing:-0.362px;">Trimmer</span>
<svg style="left:1360px;top:440px;" width="10" height="10" viewBox="0 0 10 10"><rect x="0.5" y="1" width="8" height="7.5" fill="none" stroke="#f0f0f0" stroke-width="1"/><rect x="0" y="0" width="9" height="2" fill="#f0f0f0"/></svg>
<svg style="left:1378px;top:440px;" width="10" height="10" viewBox="0 0 10 10"><path d="M1.2,1.8L7.8,8.4M7.8,1.8L1.2,8.4" stroke="#f0f0f0" stroke-width="2"/></svg>
<div style="left:0px;top:509px;width:1916px;height:416px;background:#232323;"></div>
<div style="left:0px;top:462px;width:251px;height:47px;background:#464646;"></div>
<div style="left:0px;top:462px;width:251px;height:1px;background:#8a8a8a;"></div>
<svg style="left:2px;top:465.5px;" width="4" height="4" viewBox="0 0 4 4"><path d="M1.8,0.5L3.1,1.8L1.8,3.1L0.5,1.8Z" fill="none" stroke="#303030" stroke-width="0.6"/></svg>
<svg style="left:2px;top:470.5px;" width="4" height="4" viewBox="0 0 4 4"><path d="M1.8,0.5L3.1,1.8L1.8,3.1L0.5,1.8Z" fill="none" stroke="#303030" stroke-width="0.6"/></svg>
<svg style="left:2px;top:475.5px;" width="4" height="4" viewBox="0 0 4 4"><path d="M1.8,0.5L3.1,1.8L1.8,3.1L0.5,1.8Z" fill="none" stroke="#303030" stroke-width="0.6"/></svg>
<svg style="left:2px;top:480.5px;" width="4" height="4" viewBox="0 0 4 4"><path d="M1.8,0.5L3.1,1.8L1.8,3.1L0.5,1.8Z" fill="none" stroke="#303030" stroke-width="0.6"/></svg>
<svg style="left:2px;top:485.5px;" width="4" height="4" viewBox="0 0 4 4"><path d="M1.8,0.5L3.1,1.8L1.8,3.1L0.5,1.8Z" fill="none" stroke="#303030" stroke-width="0.6"/></svg>
<svg style="left:2px;top:490.5px;" width="4" height="4" viewBox="0 0 4 4"><path d="M1.8,0.5L3.1,1.8L1.8,3.1L0.5,1.8Z" fill="none" stroke="#303030" stroke-width="0.6"/></svg>
<span class="t" id="t73" style="left:133.3px;top:478.5px;line-height:16px;font-size:23px;color:#dcdcdc;letter-spacing:-1.229px;line-height:30px;margin-top:-7px;">00:00:00.00</span>
<div style="left:255px;top:462px;width:1642px;height:47px;background:#363636;"></div>
<div style="left:255px;top:462px;width:1642px;height:1px;background:#444444;"></div>
<div style="left:255px;top:491px;width:1642px;height:1px;background:#262626;"></div>
<div style="left:255px;top:492px;width:1642px;height:1px;background:#444444;"></div>
<div style="left:1897px;top:462px;width:17px;height:463px;background:#2d2d2d;"></div>
<div style="left:1898px;top:462px;width:16px;height:17px;background:#5f5f5f;"></div>
<svg style="left:1901px;top:465px;" width="10" height="11" viewBox="0 0 10 11"><path d="M1,0.8H9V6.6H4.6L1,10Z" fill="#f0f0f0"/><rect x="3" y="2.6" width="4" height="2.2" fill="#5f5f5f"/></svg>
<svg style="left:1901px;top:485px;" width="9" height="5" viewBox="0 0 9 5"><path d="M0,4.5H8L4,0.5Z" fill="#3c3c3c"/></svg>
<svg style="left:1901px;top:794px;" width="9" height="5" viewBox="0 0 9 5"><path d="M0,0.5H8L4,4.5Z" fill="#3c3c3c"/></svg>
<div style="left:1898px;top:805px;width:16px;height:40px;background:#5f5f5f;"></div>
<svg style="left:1901px;top:808px;" width="10" height="10" viewBox="0 0 10 10"><path d="M5,2V8M2,5H8" stroke="#3a3a3a" stroke-width="1.4"/></svg>
<svg style="left:1901px;top:831px;" width="10" height="10" viewBox="0 0 10 10"><path d="M2,5H8" stroke="#3a3a3a" stroke-width="1.4"/></svg>
<svg style="left:255px;top:493px;" width="1642" height="16" viewBox="0 0 1642 16"><rect x="0" y="9" width="1" height="7" fill="#c8c8c8"/><rect x="13" y="13" width="1" height="3" fill="#c8c8c8"/><rect x="27" y="13" width="1" height="3" fill="#c8c8c8"/><rect x="40" y="13" width="1" height="3" fill="#c8c8c8"/><rect x="54" y="13" width="1" height="3" fill="#c8c8c8"/><rect x="67" y="13" width="1" height="3" fill="#c8c8c8"/><rect x="81" y="13" width="1" height="3" fill="#c8c8c8"/><rect x="94" y="13" width="1" height="3" fill="#c8c8c8"/><rect x="108" y="13" width="1" height="3" fill="#c8c8c8"/><rect x="121" y="13" width="1" height="3" fill="#c8c8c8"/><rect x="135" y="9" width="1" height="7" fill="#c8c8c8"/><rect x="148" y="13" width="1" height="3" fill="#c8c8c8"/><rect x="162" y="13" width="1" height="3" fill="#c8c8c8"/><rect x="175" y="13" width="1" height="3" fill="#c8c8c8"/><rect x="189" y="13" width="1" height="3" fill="#c8c8c8"/><rect x="202" y="13" width="1" height="3" fill="#c8c8c8"/><rect x="216" y="13" width="1" height="3" fill="#c8c8c8"/><rect x="229" y="13" width="1" height="3" fill="#c8c8c8"/><rect x="242" y="13" width="1" height="3" fill="#c8c8c8"/><rect x="256" y="13" width="1" height="3" fill="#c8c8c8"/><rect x="269" y="9" width="1" height="7" fill="#c8c8c8"/><rect x="283" y="13" width="1" height="3" fill="#c8c8c8"/><rect x="296" y="13" width="1" height="3" fill="#c8c8c8"/><rect x="310" y="13" width="1" height="3" fill="#c8c8c8"/><rect x="323" y="13" width="1" height="3" fill="#c8c8c8"/><rect x="337" y="13" width="1" height="3" fill="#c8c8c8"/><rect x="350" y="13" width="1" height="3" fill="#c8c8c8"/><rect x="364" y="13" width="1" height="3" fill="#c8c8c8"/><rect x="377" y="13" width="1" height="3" fill="#c8c8c8"/><rect x="391" y="13" width="1" height="3" fill="#c8c8c8"/><rect x="404" y="9" width="1" height="7" fill="#c8c8c8"/><rect x="418" y="13" width="1" height="3" fill="#c8c8c8"/><rect x="431" y="13" width="1" height="3" fill="#c8c8c8"/><rect x="445" y="13" width="1" height="3" fill="#c8c8c8"/><rect x="458" y="13" width="1" height="3" fill="#c8c8c8"/><rect x="472" y="13" width="1" height="3" fill="#c8c8c8"/><rect x="485" y="13" width="1" height="3" fill="#c8c8c8"/><rect x="499" y="13" width="1" height="3" fill="#c8c8c8"/><rect x="512" y="13" width="1" height="3" fill="#c8c8c8"/><rect x="526" y="13" width="1" height="3" fill="#c8c8c8"/><rect x="539" y="9" width="1" height="7" fill="#c8c8c8"/><rect x="553" y="13" width="1" height="3" fill="#c8c8c8"/><rect x="566" y="13" width="1" height="3" fill="#c8c8c8"/><rect x="580" y="13" width="1" height="3" fill="#c8c8c8"/><rect x="593" y="13" width="1" height="3" fill="#c8c8c8"/><rect x="607" y="13" width="1" height="3" fill="#c8c8c8"/><rect x="620" y="13" width="1" height="3" fill="#c8c8c8"/><rect x="634" y="13" width="1" height="3" fill="#c8c8c8"/><rect x="647" y="13" width="1" height="3" fill="#c8c8c8"/><rect x="660" y="13" width="1" height="3" fill="#c8c8c8"/><rect x="674" y="9" width="1" height="7" fill="#c8c8c8"/><rect x="687" y="13" width="1" height="3" fill="#c8c8c8"/><rect x="701" y="13" width="1" height="3" fill="#c8c8c8"/><rect x="714" y="13" width="1" height="3" fill="#c8c8c8"/><rect x="728" y="13" width="1" height="3" fill="#c8c8c8"/><rect x="741" y="13" width="1" height="3" fill="#c8c8c8"/><rect x="755" y="13" width="1" height="3" fill="#c8c8c8"/><rect x="768" y="13" width="1" height="3" fill="#c8c8c8"/><rect x="782" y="13" width="1" height="3" fill="#c8c8c8"/><rect x="795" y="13" width="1" height="3" fill="#c8c8c8"/><rect x="809" y="9" width="1" height="7" fill="#c8c8c8"/><rect x="822" y="13" width="1" height="3" fill="#c8c8c8"/><rect x="836" y="13" width="1" height="3" fill="#c8c8c8"/><rect x="849" y="13" width="1" height="3" fill="#c8c8c8"/><rect x="863" y="13" width="1" height="3" fill="#c8c8c8"/><rect x="876" y="13" width="1" height="3" fill="#c8c8c8"/><rect x="890" y="13" width="1" height="3" fill="#c8c8c8"/><rect x="903" y="13" width="1" height="3" fill="#c8c8c8"/><rect x="917" y="13" width="1" height="3" fill="#c8c8c8"/><rect x="930" y="13" width="1" height="3" fill="#c8c8c8"/><rect x="944" y="9" width="1" height="7" fill="#c8c8c8"/><rect x="957" y="13" width="1" height="3" fill="#c8c8c8"/><rect x="971" y="13" width="1" height="3" fill="#c8c8c8"/><rect x="984" y="13" width="1" height="3" fill="#c8c8c8"/><rect x="998" y="13" width="1" height="3" fill="#c8c8c8"/><rect x="1011" y="13" width="1" height="3" fill="#c8c8c8"/><rect x="1025" y="13" width="1" height="3" fill="#c8c8c8"/><rect x="1038" y="13" width="1" height="3" fill="#c8c8c8"/><rect x="1051" y="13" width="1" height="3" fill="#c8c8c8"/><rect x="1065" y="13" width="1" height="3" fill="#c8c8c8"/><rect x="1078" y="9" width="1" height="7" fill="#c8c8c8"/><rect x="1092" y="13" width="1" height="3" fill="#c8c8c8"/><rect x="1105" y="13" width="1" height="3" fill="#c8c8c8"/><rect x="1119" y="13" width="1" height="3" fill="#c8c8c8"/><rect x="1132" y="13" width="1" height="3" fill="#c8c8c8"/><rect x="1146" y="13" width="1" height="3" fill="#c8c8c8"/><rect x="1159" y="13" width="1" height="3" fill="#c8c8c8"/><rect x="1173" y="13" width="1" height="3" fill="#c8c8c8"/><rect x="1186" y="13" width="1" height="3" fill="#c8c8c8"/><rect x="1200" y="13" width="1" height="3" fill="#c8c8c8"/><rect x="1213" y="9" width="1" height="7" fill="#c8c8c8"/><rect x="1227" y="13" width="1" height="3" fill="#c8c8c8"/><rect x="1240" y="13" width="1" height="3" fill="#c8c8c8"/><rect x="1254" y="13" width="1" height="3" fill="#c8c8c8"/><rect x="1267" y="13" width="1" height="3" fill="#c8c8c8"/><rect x="1281" y="13" width="1" height="3" fill="#c8c8c8"/><rect x="1294" y="13" width="1" height="3" fill="#c8c8c8"/><rect x="1308" y="13" width="1" height="3" fill="#c8c8c8"/><rect x="1321" y="13" width="1" height="3" fill="#c8c8c8"/><rect x="1335" y="13" width="1" height="3" fill="#c8c8c8"/><rect x="1348" y="9" width="1" height="7" fill="#c8c8c8"/><rect x="1362" y="13" width="1" height="3" fill="#c8c8c8"/><rect x="1375" y="13" width="1" height="3" fill="#c8c8c8"/><rect x="1389" y="13" width="1" height="3" fill="#c8c8c8"/><rect x="1402" y="13" width="1" height="3" fill="#c8c8c8"/><rect x="1416" y="13" width="1" height="3" fill="#c8c8c8"/><rect x="1429" y="13" width="1" height="3" fill="#c8c8c8"/><rect x="1442" y="13" width="1" height="3" fill="#c8c8c8"/><rect x="1456" y="13" width="1" height="3" fill="#c8c8c8"/><rect x="1469" y="13" width="1" height="3" fill="#c8c8c8"/><rect x="1483" y="9" width="1" height="7" fill="#c8c8c8"/><rect x="1496" y="13" width="1" height="3" fill="#c8c8c8"/><rect x="1510" y="13" width="1" height="3" fill="#c8c8c8"/><rect x="1523" y="13" width="1" height="3" fill="#c8c8c8"/><rect x="1537" y="13" width="1" height="3" fill="#c8c8c8"/><rect x="1550" y="13" width="1" height="3" fill="#c8c8c8"/><rect x="1564" y="13" width="1" height="3" fill="#c8c8c8"/><rect x="1577" y="13" width="1" height="3" fill="#c8c8c8"/><rect x="1591" y="13" width="1" height="3" fill="#c8c8c8"/><rect x="1604" y="13" width="1" height="3" fill="#c8c8c8"/><rect x="1618" y="9" width="1" height="7" fill="#c8c8c8"/><rect x="1631" y="13" width="1" height="3" fill="#c8c8c8"/></svg>
<span class="t" id="t74" style="left:256.2px;top:492.8px;line-height:16px;font-size:10.6px;color:#c8c8c8;letter-spacing:-0.719px;">00:00:00</span>
<span class="t" id="t75" style="left:392px;top:492.8px;line-height:16px;font-size:10.6px;color:#c8c8c8;letter-spacing:-0.719px;">00:00:10</span>
<span class="t" id="t76" style="left:526px;top:492.8px;line-height:16px;font-size:10.6px;color:#c8c8c8;letter-spacing:-0.719px;">00:00:20</span>
<span class="t" id="t77" style="left:661px;top:492.8px;line-height:16px;font-size:10.6px;color:#c8c8c8;letter-spacing:-0.719px;">00:00:30</span>
<span class="t" id="t78" style="left:796px;top:492.8px;line-height:16px;font-size:10.6px;color:#c8c8c8;letter-spacing:-0.719px;">00:00:40</span>
<span class="t" id="t79" style="left:931px;top:492.8px;line-height:16px;font-size:10.6px;color:#c8c8c8;letter-spacing:-0.719px;">00:00:50</span>
<span class="t" id="t80" style="left:1066px;top:492.8px;line-height:16px;font-size:10.6px;color:#c8c8c8;letter-spacing:-0.719px;">00:01:00</span>
<span class="t" id="t81" style="left:1201px;top:492.8px;line-height:16px;font-size:10.6px;color:#c8c8c8;letter-spacing:-0.719px;">00:01:10</span>
<span class="t" id="t82" style="left:1335px;top:492.8px;line-height:16px;font-size:10.6px;color:#c8c8c8;letter-spacing:-0.719px;">00:01:20</span>
<span class="t" id="t83" style="left:1470px;top:492.8px;line-height:16px;font-size:10.6px;color:#c8c8c8;letter-spacing:-0.719px;">00:01:30</span>
<span class="t" id="t84" style="left:1605px;top:492.8px;line-height:16px;font-size:10.6px;color:#c8c8c8;letter-spacing:-0.719px;">00:01:40</span>
<span class="t" id="t85" style="left:1740px;top:492.8px;line-height:16px;font-size:10.6px;color:#c8c8c8;letter-spacing:-0.719px;">00:01:50</span>
<span class="t" id="t86" style="left:1875px;top:492.8px;line-height:16px;font-size:10.6px;color:#c8c8c8;letter-spacing:-1.003px;">00:02</span>
<div style="left:255px;top:509px;width:1px;height:412px;background:#000;"></div>
<svg style="left:255px;top:494px;" width="8" height="16" viewBox="0 0 8 16"><path d="M0,0H6.4V9L0,15.4Z" fill="#f4f4f4"/><rect x="2.4" y="3" width="1.6" height="3.8" fill="#111"/></svg>
<svg style="left:255px;top:484px;" width="9" height="9" viewBox="0 0 9 9"><path d="M1,1H8.5L1,8.5Z" fill="#ffee00"/></svg>
<div style="left:0px;top:846px;width:251.5px;height:79px;background:#3c3c3c;"></div>
<div style="left:2px;top:851px;width:228px;height:67px;background:#2d2d2d;"></div>
<div style="left:230px;top:865px;width:20px;height:53px;background:#232323;"></div>
<div style="left:230px;top:851px;width:20px;height:14px;background:#2d2d2d;"></div>
<div style="left:252px;top:846px;width:2px;height:79px;background:#232323;"></div>
<div style="left:255px;top:846px;width:1642px;height:4px;background:#484848;"></div>
<div style="left:255px;top:850px;width:1642px;height:1px;background:#262626;"></div>
<div style="left:255px;top:851px;width:1642px;height:70px;background:#2d2d2d;"></div>
<div style="left:255px;top:846px;width:1px;height:75px;background:#000;"></div>
<div style="left:390px;top:853px;width:1px;height:66px;background:repeating-linear-gradient(to bottom,#a0a0a0 0 1px,transparent 1px 4px);"></div>
<div style="left:524px;top:853px;width:1px;height:66px;background:repeating-linear-gradient(to bottom,#a0a0a0 0 1px,transparent 1px 4px);"></div>
<div style="left:659px;top:853px;width:1px;height:66px;background:repeating-linear-gradient(to bottom,#a0a0a0 0 1px,transparent 1px 4px);"></div>
<div style="left:794px;top:853px;width:1px;height:66px;background:repeating-linear-gradient(to bottom,#a0a0a0 0 1px,transparent 1px 4px);"></div>
<div style="left:929px;top:853px;width:1px;height:66px;background:repeating-linear-gradient(to bottom,#a0a0a0 0 1px,transparent 1px 4px);"></div>
<div style="left:1064px;top:853px;width:1px;height:66px;background:repeating-linear-gradient(to bottom,#a0a0a0 0 1px,transparent 1px 4px);"></div>
<div style="left:1199px;top:853px;width:1px;height:66px;background:repeating-linear-gradient(to bottom,#a0a0a0 0 1px,transparent 1px 4px);"></div>
<div style="left:1333px;top:853px;width:1px;height:66px;background:repeating-linear-gradient(to bottom,#a0a0a0 0 1px,transparent 1px 4px);"></div>
<div style="left:1468px;top:853px;width:1px;height:66px;background:repeating-linear-gradient(to bottom,#a0a0a0 0 1px,transparent 1px 4px);"></div>
<div style="left:1603px;top:853px;width:1px;height:66px;background:repeating-linear-gradient(to bottom,#a0a0a0 0 1px,transparent 1px 4px);"></div>
<div style="left:1738px;top:853px;width:1px;height:66px;background:repeating-linear-gradient(to bottom,#a0a0a0 0 1px,transparent 1px 4px);"></div>
<div style="left:1873px;top:853px;width:1px;height:66px;background:repeating-linear-gradient(to bottom,#a0a0a0 0 1px,transparent 1px 4px);"></div>
<div style="left:255px;top:921px;width:1642px;height:4px;background:#2d2d2d;"></div>
<div style="left:273px;top:921px;width:1567px;height:4px;background:#5a5a5a;"></div>
<div style="left:1858px;top:921px;width:56px;height:4px;background:#5a5a5a;"></div>
<svg style="left:1901px;top:856px;" width="9" height="6" viewBox="0 0 9 6"><path d="M0,5H8L4,0.6Z" fill="#f0f0f0"/></svg>
<div style="left:1898px;top:869px;width:16px;height:20px;background:#646464;"></div>
<div style="left:1901px;top:876px;width:10px;height:2px;background:#2d2d2d;"></div>
<div style="left:1901px;top:880px;width:10px;height:2px;background:#2d2d2d;"></div>
<svg style="left:1901px;top:908px;" width="9" height="6" viewBox="0 0 9 6"><path d="M0,0.6H8L4,5Z" fill="#f0f0f0"/></svg>
<span class="t" id="t87" style="left:4px;top:854.0px;line-height:16px;font-size:11px;color:#dcdcdc;letter-spacing:-0.104px;">Master</span>
<span class="t" id="t88" style="left:6px;top:876.0px;line-height:16px;font-size:11px;color:#dcdcdc;letter-spacing:-0.340px;">Vol:</span>
<span class="t" id="t89" style="left:6px;top:896.0px;line-height:16px;font-size:11px;color:#dcdcdc;letter-spacing:-0.340px;">Vol:</span>
<span class="t" id="t90" style="left:53.5px;top:876.0px;line-height:16px;font-size:11px;color:#dcdcdc;letter-spacing:-0.135px;">0.0 dB</span>
<span class="t" id="t91" style="left:53.5px;top:896.0px;line-height:16px;font-size:11px;color:#dcdcdc;letter-spacing:-0.135px;">0.0 dB</span>
<svg style="left:52px;top:853px;" width="14" height="16" viewBox="0 0 14 16"><path d="M7,0.8L11,5H3Z" fill="#f0f0f0"/><rect x="0.8" y="6" width="12.4" height="4" fill="#f0f0f0"/><path d="M7,15.2L11,11H3Z" fill="#f0f0f0"/></svg>
<svg style="left:76px;top:854px;" width="14" height="14" viewBox="0 0 14 14"><path d="M7,5L10.4,1H3.6Z" fill="#f0f0f0"/><rect x="0.8" y="6.4" width="12.4" height="1.2" fill="#f0f0f0"/><path d="M7,9L10.4,13H3.6Z" fill="#f0f0f0"/></svg>
<svg style="left:101px;top:855px;" width="16" height="15" viewBox="0 0 16 15"><rect x="1" y="6" width="4" height="3" fill="#f08c9c"/><path d="M6,7L9,2" stroke="#f08c9c" stroke-width="1.3"/><rect x="10" y="1.5" width="5" height="3" fill="#f08c9c"/><rect x="10" y="6.5" width="5" height="3" fill="#c8b064"/><rect x="10" y="11.5" width="5" height="3" fill="#6ec878"/></svg>
<svg style="left:125px;top:853px;" width="6" height="18" viewBox="0 0 6 18"><rect x="1.8" y="0.5" width="1.4" height="17" fill="#f0f0f0"/><rect x="0.8" y="6" width="3.4" height="7" fill="#464646" stroke="#f0f0f0" stroke-width="1"/></svg>
<span class="t" id="t92" style="left:130px;top:852.0px;line-height:16px;font-size:13px;color:#5aa6cc;font-weight:bold;font-family:'Liberation Serif',serif;font-style:italic;letter-spacing:-0.5px;">fx</span>
<span class="t" id="t93" style="left:150.5px;top:854.0px;line-height:16px;font-size:16px;color:#f4f4f4;font-weight:bold;font-family:'Liberation Serif',serif;font-style:italic;line-height:20px;margin-top:-2px;letter-spacing:-0.8px;">fx</span>
<svg style="left:182px;top:853px;" width="18" height="18" viewBox="0 0 18 18"><circle cx="8.6" cy="9.6" r="7" fill="#e88a98"/><text x="8" y="13.4" font-size="10.5" font-weight="bold" text-anchor="middle" fill="#26181c" font-family="Liberation Sans,sans-serif">M</text><circle cx="13.4" cy="4.6" r="2.8" fill="#2d2d2d" stroke="#f0f0f0" stroke-width="1.1"/><path d="M11.6,2.8L15.2,6.4" stroke="#f0f0f0" stroke-width="1.1"/></svg>
<svg style="left:206px;top:853px;" width="18" height="18" viewBox="0 0 18 18"><circle cx="8.4" cy="9.6" r="7" fill="#c8b064"/><text x="8" y="13.4" font-size="10.5" font-weight="bold" text-anchor="middle" fill="#26221a" font-family="Liberation Sans,sans-serif">S</text><rect x="13.6" y="2.6" width="2" height="6" fill="#f0f0f0" stroke="#2d2d2d" stroke-width="0.5"/><rect x="13.6" y="9.6" width="2" height="2" fill="#f0f0f0" stroke="#2d2d2d" stroke-width="0.5"/></svg>
<div style="left:96px;top:894px;width:21px;height:1px;background:#909090;"></div>
<div style="left:128px;top:894px;width:15px;height:1px;background:#5a5a5a;"></div>
<div style="left:142px;top:892px;width:1px;height:3px;background:#5a5a5a;"></div>
<svg style="left:116.5px;top:887px;" width="12" height="14" viewBox="0 0 12 14"><rect width="11.6" height="13.6" fill="#f0f0f0"/><rect x="1.4" y="1.6" width="3.6" height="3.4" fill="#111"/><rect x="6.6" y="1.6" width="3.6" height="3.4" fill="#111"/><rect x="1.4" y="8.6" width="3.6" height="3.4" fill="#111"/><rect x="6.6" y="8.6" width="3.6" height="3.4" fill="#111"/><rect x="0" y="6.4" width="11.6" height="0.9" fill="#2d2d2d"/></svg>
<svg style="left:153.5px;top:886.3px;" width="16" height="16" viewBox="0 0 16 16"><circle cx="8" cy="8" r="4.6" fill="none" stroke="#f08c9c" stroke-width="1"/><text x="8" y="11" font-size="8" font-weight="bold" text-anchor="middle" fill="#f08c9c" font-family="Liberation Sans,sans-serif">R</text><circle cx="14.10" cy="10.53" r="1.1" fill="#f0f0f0"/><circle cx="10.53" cy="14.10" r="1.1" fill="#f0f0f0"/><circle cx="5.47" cy="14.10" r="1.1" fill="#f0f0f0"/><circle cx="1.90" cy="10.53" r="1.1" fill="#f0f0f0"/><circle cx="1.90" cy="5.47" r="1.1" fill="#f0f0f0"/><circle cx="5.47" cy="1.90" r="1.1" fill="#f0f0f0"/><circle cx="10.53" cy="1.90" r="1.1" fill="#f0f0f0"/><circle cx="14.10" cy="5.47" r="1.1" fill="#f0f0f0"/></svg>
<span class="t" id="t94" style="left:173.5px;top:886.0px;line-height:16px;font-size:11px;color:#dcdcdc;letter-spacing:-0.072px;">Touch</span>
<svg style="left:217px;top:893px;" width="7" height="5" viewBox="0 0 7 5"><path d="M0,0.4H6L3,4Z" fill="#f0f0f0"/></svg>
<span class="t" id="t95" style="left:236px;top:868.0px;line-height:16px;font-size:9px;color:#dcdcdc;letter-spacing:-0.008px;">12</span>
<div style="left:247px;top:876px;width:2px;height:1px;background:#c8c8c8;"></div>
<span class="t" id="t96" style="left:236px;top:878.85px;line-height:16px;font-size:9px;color:#dcdcdc;letter-spacing:-0.008px;">24</span>
<div style="left:247px;top:887px;width:2px;height:1px;background:#c8c8c8;"></div>
<span class="t" id="t97" style="left:236px;top:889.7px;line-height:16px;font-size:9px;color:#dcdcdc;letter-spacing:-0.008px;">36</span>
<div style="left:247px;top:898px;width:2px;height:1px;background:#c8c8c8;"></div>
<span class="t" id="t98" style="left:236px;top:900.55px;line-height:16px;font-size:9px;color:#dcdcdc;letter-spacing:-0.008px;">48</span>
<div style="left:247px;top:909px;width:2px;height:1px;background:#c8c8c8;"></div>
<div style="left:250px;top:868px;width:1px;height:50px;background:repeating-linear-gradient(to bottom,#c8c8c8 0 1px,transparent 1px 4px);"></div>
</body></html>
